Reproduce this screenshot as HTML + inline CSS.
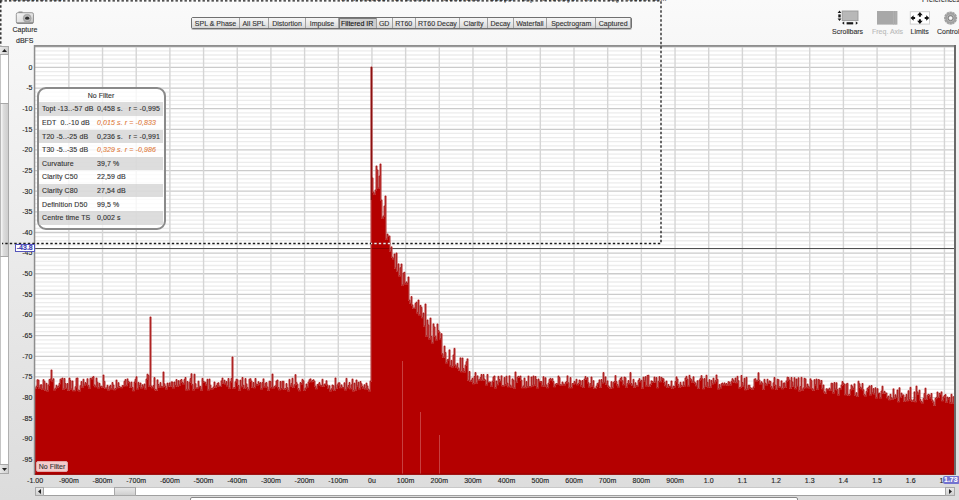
<!DOCTYPE html><html><head><meta charset="utf-8"><style>
html,body{margin:0;padding:0;}
body{-webkit-text-stroke:0.12px;width:959px;height:500px;overflow:hidden;position:relative;background:linear-gradient(#fafafa 0,#f7f7f7 46px,#dcdcdc 500px);font-family:"Liberation Sans",sans-serif;color:#2a2a2a;}
.a{position:absolute;white-space:nowrap;}
.t{font-size:7px;line-height:8px;}
.tabs{position:absolute;left:191px;top:17px;height:10px;border:1px solid #707070;border-radius:2px;display:flex;box-shadow:0 1px 0 #bdbdbd;}
.tab{height:10px;box-sizing:border-box;border-right:1px solid #a0a0a0;background:linear-gradient(#f6f6f6,#e6e6e6 60%,#d6d6d6);font-size:7px;line-height:11px;text-align:center;color:#333;}
.tab.sel{background:#cdcdcd;box-shadow:inset 1px 1px 0 #7a7a7a;color:#111;}
.yl{position:absolute;right:926.6px;font-size:7px;line-height:8px;color:#222;text-align:right;}
.xl{position:absolute;top:476.6px;font-size:7px;line-height:8px;color:#222;}
.row{position:absolute;left:39px;width:124px;height:13.6px;font-size:7px;line-height:14.8px;color:#333;}
.row.g{background:rgba(200,200,200,0.62);}
.row span{position:absolute;letter-spacing:0.1px;}
.or{color:#e07a3a;font-style:italic;}
</style></head><body>

<svg class="a" style="left:0;top:0" width="959" height="500" viewBox="0 0 959 500">
<rect x="35" y="46" width="919" height="428" fill="#fff"/>
<line x1="35" x2="954" y1="46.77" y2="46.77" stroke="#cbcbcb" stroke-width="1.3"/>
<line x1="35" x2="954" y1="50.89" y2="50.89" stroke="#ececec" stroke-width="1.3"/>
<line x1="35" x2="954" y1="55.02" y2="55.02" stroke="#ececec" stroke-width="1.3"/>
<line x1="35" x2="954" y1="59.15" y2="59.15" stroke="#ececec" stroke-width="1.3"/>
<line x1="35" x2="954" y1="63.27" y2="63.27" stroke="#ececec" stroke-width="1.3"/>
<line x1="35" x2="954" y1="67.40" y2="67.40" stroke="#cbcbcb" stroke-width="1.3"/>
<line x1="35" x2="954" y1="71.53" y2="71.53" stroke="#ececec" stroke-width="1.3"/>
<line x1="35" x2="954" y1="75.65" y2="75.65" stroke="#ececec" stroke-width="1.3"/>
<line x1="35" x2="954" y1="79.78" y2="79.78" stroke="#ececec" stroke-width="1.3"/>
<line x1="35" x2="954" y1="83.91" y2="83.91" stroke="#ececec" stroke-width="1.3"/>
<line x1="35" x2="954" y1="88.03" y2="88.03" stroke="#cbcbcb" stroke-width="1.3"/>
<line x1="35" x2="954" y1="92.16" y2="92.16" stroke="#ececec" stroke-width="1.3"/>
<line x1="35" x2="954" y1="96.29" y2="96.29" stroke="#ececec" stroke-width="1.3"/>
<line x1="35" x2="954" y1="100.42" y2="100.42" stroke="#ececec" stroke-width="1.3"/>
<line x1="35" x2="954" y1="104.54" y2="104.54" stroke="#ececec" stroke-width="1.3"/>
<line x1="35" x2="954" y1="108.67" y2="108.67" stroke="#cbcbcb" stroke-width="1.3"/>
<line x1="35" x2="954" y1="112.80" y2="112.80" stroke="#ececec" stroke-width="1.3"/>
<line x1="35" x2="954" y1="116.92" y2="116.92" stroke="#ececec" stroke-width="1.3"/>
<line x1="35" x2="954" y1="121.05" y2="121.05" stroke="#ececec" stroke-width="1.3"/>
<line x1="35" x2="954" y1="125.18" y2="125.18" stroke="#ececec" stroke-width="1.3"/>
<line x1="35" x2="954" y1="129.31" y2="129.31" stroke="#cbcbcb" stroke-width="1.3"/>
<line x1="35" x2="954" y1="133.43" y2="133.43" stroke="#ececec" stroke-width="1.3"/>
<line x1="35" x2="954" y1="137.56" y2="137.56" stroke="#ececec" stroke-width="1.3"/>
<line x1="35" x2="954" y1="141.69" y2="141.69" stroke="#ececec" stroke-width="1.3"/>
<line x1="35" x2="954" y1="145.81" y2="145.81" stroke="#ececec" stroke-width="1.3"/>
<line x1="35" x2="954" y1="149.94" y2="149.94" stroke="#cbcbcb" stroke-width="1.3"/>
<line x1="35" x2="954" y1="154.07" y2="154.07" stroke="#ececec" stroke-width="1.3"/>
<line x1="35" x2="954" y1="158.19" y2="158.19" stroke="#ececec" stroke-width="1.3"/>
<line x1="35" x2="954" y1="162.32" y2="162.32" stroke="#ececec" stroke-width="1.3"/>
<line x1="35" x2="954" y1="166.45" y2="166.45" stroke="#ececec" stroke-width="1.3"/>
<line x1="35" x2="954" y1="170.57" y2="170.57" stroke="#cbcbcb" stroke-width="1.3"/>
<line x1="35" x2="954" y1="174.70" y2="174.70" stroke="#ececec" stroke-width="1.3"/>
<line x1="35" x2="954" y1="178.83" y2="178.83" stroke="#ececec" stroke-width="1.3"/>
<line x1="35" x2="954" y1="182.96" y2="182.96" stroke="#ececec" stroke-width="1.3"/>
<line x1="35" x2="954" y1="187.08" y2="187.08" stroke="#ececec" stroke-width="1.3"/>
<line x1="35" x2="954" y1="191.21" y2="191.21" stroke="#cbcbcb" stroke-width="1.3"/>
<line x1="35" x2="954" y1="195.34" y2="195.34" stroke="#ececec" stroke-width="1.3"/>
<line x1="35" x2="954" y1="199.46" y2="199.46" stroke="#ececec" stroke-width="1.3"/>
<line x1="35" x2="954" y1="203.59" y2="203.59" stroke="#ececec" stroke-width="1.3"/>
<line x1="35" x2="954" y1="207.72" y2="207.72" stroke="#ececec" stroke-width="1.3"/>
<line x1="35" x2="954" y1="211.84" y2="211.84" stroke="#cbcbcb" stroke-width="1.3"/>
<line x1="35" x2="954" y1="215.97" y2="215.97" stroke="#ececec" stroke-width="1.3"/>
<line x1="35" x2="954" y1="220.10" y2="220.10" stroke="#ececec" stroke-width="1.3"/>
<line x1="35" x2="954" y1="224.23" y2="224.23" stroke="#ececec" stroke-width="1.3"/>
<line x1="35" x2="954" y1="228.35" y2="228.35" stroke="#ececec" stroke-width="1.3"/>
<line x1="35" x2="954" y1="232.48" y2="232.48" stroke="#cbcbcb" stroke-width="1.3"/>
<line x1="35" x2="954" y1="236.61" y2="236.61" stroke="#ececec" stroke-width="1.3"/>
<line x1="35" x2="954" y1="240.73" y2="240.73" stroke="#ececec" stroke-width="1.3"/>
<line x1="35" x2="954" y1="244.86" y2="244.86" stroke="#ececec" stroke-width="1.3"/>
<line x1="35" x2="954" y1="248.99" y2="248.99" stroke="#ececec" stroke-width="1.3"/>
<line x1="35" x2="954" y1="253.12" y2="253.12" stroke="#cbcbcb" stroke-width="1.3"/>
<line x1="35" x2="954" y1="257.24" y2="257.24" stroke="#ececec" stroke-width="1.3"/>
<line x1="35" x2="954" y1="261.37" y2="261.37" stroke="#ececec" stroke-width="1.3"/>
<line x1="35" x2="954" y1="265.50" y2="265.50" stroke="#ececec" stroke-width="1.3"/>
<line x1="35" x2="954" y1="269.62" y2="269.62" stroke="#ececec" stroke-width="1.3"/>
<line x1="35" x2="954" y1="273.75" y2="273.75" stroke="#cbcbcb" stroke-width="1.3"/>
<line x1="35" x2="954" y1="277.88" y2="277.88" stroke="#ececec" stroke-width="1.3"/>
<line x1="35" x2="954" y1="282.00" y2="282.00" stroke="#ececec" stroke-width="1.3"/>
<line x1="35" x2="954" y1="286.13" y2="286.13" stroke="#ececec" stroke-width="1.3"/>
<line x1="35" x2="954" y1="290.26" y2="290.26" stroke="#ececec" stroke-width="1.3"/>
<line x1="35" x2="954" y1="294.38" y2="294.38" stroke="#cbcbcb" stroke-width="1.3"/>
<line x1="35" x2="954" y1="298.51" y2="298.51" stroke="#ececec" stroke-width="1.3"/>
<line x1="35" x2="954" y1="302.64" y2="302.64" stroke="#ececec" stroke-width="1.3"/>
<line x1="35" x2="954" y1="306.77" y2="306.77" stroke="#ececec" stroke-width="1.3"/>
<line x1="35" x2="954" y1="310.89" y2="310.89" stroke="#ececec" stroke-width="1.3"/>
<line x1="35" x2="954" y1="315.02" y2="315.02" stroke="#cbcbcb" stroke-width="1.3"/>
<line x1="35" x2="954" y1="319.15" y2="319.15" stroke="#ececec" stroke-width="1.3"/>
<line x1="35" x2="954" y1="323.27" y2="323.27" stroke="#ececec" stroke-width="1.3"/>
<line x1="35" x2="954" y1="327.40" y2="327.40" stroke="#ececec" stroke-width="1.3"/>
<line x1="35" x2="954" y1="331.53" y2="331.53" stroke="#ececec" stroke-width="1.3"/>
<line x1="35" x2="954" y1="335.65" y2="335.65" stroke="#cbcbcb" stroke-width="1.3"/>
<line x1="35" x2="954" y1="339.78" y2="339.78" stroke="#ececec" stroke-width="1.3"/>
<line x1="35" x2="954" y1="343.91" y2="343.91" stroke="#ececec" stroke-width="1.3"/>
<line x1="35" x2="954" y1="348.04" y2="348.04" stroke="#ececec" stroke-width="1.3"/>
<line x1="35" x2="954" y1="352.16" y2="352.16" stroke="#ececec" stroke-width="1.3"/>
<line x1="35" x2="954" y1="356.29" y2="356.29" stroke="#cbcbcb" stroke-width="1.3"/>
<line x1="35" x2="954" y1="360.42" y2="360.42" stroke="#ececec" stroke-width="1.3"/>
<line x1="35" x2="954" y1="364.54" y2="364.54" stroke="#ececec" stroke-width="1.3"/>
<line x1="35" x2="954" y1="368.67" y2="368.67" stroke="#ececec" stroke-width="1.3"/>
<line x1="35" x2="954" y1="372.80" y2="372.80" stroke="#ececec" stroke-width="1.3"/>
<line x1="35" x2="954" y1="376.92" y2="376.92" stroke="#cbcbcb" stroke-width="1.3"/>
<line x1="35" x2="954" y1="381.05" y2="381.05" stroke="#ececec" stroke-width="1.3"/>
<line x1="35" x2="954" y1="385.18" y2="385.18" stroke="#ececec" stroke-width="1.3"/>
<line x1="35" x2="954" y1="389.31" y2="389.31" stroke="#ececec" stroke-width="1.3"/>
<line x1="35" x2="954" y1="393.43" y2="393.43" stroke="#ececec" stroke-width="1.3"/>
<line x1="35" x2="954" y1="397.56" y2="397.56" stroke="#cbcbcb" stroke-width="1.3"/>
<line x1="35" x2="954" y1="401.69" y2="401.69" stroke="#ececec" stroke-width="1.3"/>
<line x1="35" x2="954" y1="405.81" y2="405.81" stroke="#ececec" stroke-width="1.3"/>
<line x1="35" x2="954" y1="409.94" y2="409.94" stroke="#ececec" stroke-width="1.3"/>
<line x1="35" x2="954" y1="414.07" y2="414.07" stroke="#ececec" stroke-width="1.3"/>
<line x1="35" x2="954" y1="418.19" y2="418.19" stroke="#cbcbcb" stroke-width="1.3"/>
<line x1="35" x2="954" y1="422.32" y2="422.32" stroke="#ececec" stroke-width="1.3"/>
<line x1="35" x2="954" y1="426.45" y2="426.45" stroke="#ececec" stroke-width="1.3"/>
<line x1="35" x2="954" y1="430.58" y2="430.58" stroke="#ececec" stroke-width="1.3"/>
<line x1="35" x2="954" y1="434.70" y2="434.70" stroke="#ececec" stroke-width="1.3"/>
<line x1="35" x2="954" y1="438.83" y2="438.83" stroke="#cbcbcb" stroke-width="1.3"/>
<line x1="35" x2="954" y1="442.96" y2="442.96" stroke="#ececec" stroke-width="1.3"/>
<line x1="35" x2="954" y1="447.08" y2="447.08" stroke="#ececec" stroke-width="1.3"/>
<line x1="35" x2="954" y1="451.21" y2="451.21" stroke="#ececec" stroke-width="1.3"/>
<line x1="35" x2="954" y1="455.34" y2="455.34" stroke="#ececec" stroke-width="1.3"/>
<line x1="35" x2="954" y1="459.47" y2="459.47" stroke="#cbcbcb" stroke-width="1.3"/>
<line x1="35" x2="954" y1="463.59" y2="463.59" stroke="#ececec" stroke-width="1.3"/>
<line x1="35" x2="954" y1="467.72" y2="467.72" stroke="#ececec" stroke-width="1.3"/>
<line x1="35" x2="954" y1="471.85" y2="471.85" stroke="#ececec" stroke-width="1.3"/>
<line x1="68.87" x2="68.87" y1="46" y2="474" stroke="#d5d5d5" stroke-width="1.4"/>
<line x1="102.54" x2="102.54" y1="46" y2="474" stroke="#d5d5d5" stroke-width="1.4"/>
<line x1="136.22" x2="136.22" y1="46" y2="474" stroke="#d5d5d5" stroke-width="1.4"/>
<line x1="169.89" x2="169.89" y1="46" y2="474" stroke="#d5d5d5" stroke-width="1.4"/>
<line x1="203.57" x2="203.57" y1="46" y2="474" stroke="#d5d5d5" stroke-width="1.4"/>
<line x1="237.25" x2="237.25" y1="46" y2="474" stroke="#d5d5d5" stroke-width="1.4"/>
<line x1="270.92" x2="270.92" y1="46" y2="474" stroke="#d5d5d5" stroke-width="1.4"/>
<line x1="304.60" x2="304.60" y1="46" y2="474" stroke="#d5d5d5" stroke-width="1.4"/>
<line x1="338.27" x2="338.27" y1="46" y2="474" stroke="#d5d5d5" stroke-width="1.4"/>
<line x1="371.95" x2="371.95" y1="46" y2="474" stroke="#d5d5d5" stroke-width="1.4"/>
<line x1="405.63" x2="405.63" y1="46" y2="474" stroke="#d5d5d5" stroke-width="1.4"/>
<line x1="439.30" x2="439.30" y1="46" y2="474" stroke="#d5d5d5" stroke-width="1.4"/>
<line x1="472.98" x2="472.98" y1="46" y2="474" stroke="#d5d5d5" stroke-width="1.4"/>
<line x1="506.65" x2="506.65" y1="46" y2="474" stroke="#d5d5d5" stroke-width="1.4"/>
<line x1="540.33" x2="540.33" y1="46" y2="474" stroke="#d5d5d5" stroke-width="1.4"/>
<line x1="574.01" x2="574.01" y1="46" y2="474" stroke="#d5d5d5" stroke-width="1.4"/>
<line x1="607.68" x2="607.68" y1="46" y2="474" stroke="#d5d5d5" stroke-width="1.4"/>
<line x1="641.36" x2="641.36" y1="46" y2="474" stroke="#d5d5d5" stroke-width="1.4"/>
<line x1="675.03" x2="675.03" y1="46" y2="474" stroke="#d5d5d5" stroke-width="1.4"/>
<line x1="708.71" x2="708.71" y1="46" y2="474" stroke="#d5d5d5" stroke-width="1.4"/>
<line x1="742.39" x2="742.39" y1="46" y2="474" stroke="#d5d5d5" stroke-width="1.4"/>
<line x1="776.06" x2="776.06" y1="46" y2="474" stroke="#d5d5d5" stroke-width="1.4"/>
<line x1="809.74" x2="809.74" y1="46" y2="474" stroke="#d5d5d5" stroke-width="1.4"/>
<line x1="843.41" x2="843.41" y1="46" y2="474" stroke="#d5d5d5" stroke-width="1.4"/>
<line x1="877.09" x2="877.09" y1="46" y2="474" stroke="#d5d5d5" stroke-width="1.4"/>
<line x1="910.77" x2="910.77" y1="46" y2="474" stroke="#d5d5d5" stroke-width="1.4"/>
<line x1="944.44" x2="944.44" y1="46" y2="474" stroke="#d5d5d5" stroke-width="1.4"/>
<line x1="35" x2="954" y1="248.5" y2="248.5" stroke="#505050" stroke-width="1"/>
<clipPath id="wf"><path d="M35,474.8L35,387.9L36,387.9L36,386.2L37,386.2L37,379.8L38,379.8L38,380.1L39,380.1L39,388.0L40,388.0L40,384.9L41,384.9L41,384.8L42,384.8L42,389.0L43,389.0L43,379.7L44,379.7L44,381.4L45,381.4L45,390.2L46,390.2L46,383.3L47,383.3L47,390.6L48,390.6L48,384.9L49,384.9L49,379.6L50,379.6L50,379.0L51,379.0L51,370.0L52,370.0L52,380.6L53,380.6L53,378.8L54,378.8L54,389.7L55,389.7L55,388.2L56,388.2L56,385.3L57,385.3L57,387.1L58,387.1L58,386.0L59,386.0L59,383.4L60,383.4L60,379.2L61,379.2L61,378.9L62,378.9L62,378.1L63,378.1L63,388.9L64,388.9L64,378.5L65,378.5L65,383.6L66,383.6L66,388.3L67,388.3L67,383.5L68,383.5L68,390.2L69,390.2L69,378.1L70,378.1L70,380.6L71,380.6L71,389.0L72,389.0L72,381.0L73,381.0L73,390.4L74,390.4L74,390.4L75,390.4L75,386.7L76,386.7L76,378.3L77,378.3L77,378.0L78,378.0L78,390.0L79,390.0L79,390.6L80,390.6L80,385.7L81,385.7L81,381.6L82,381.6L82,386.9L83,386.9L83,379.3L84,379.3L84,385.0L85,385.0L85,382.6L86,382.6L86,383.7L87,383.7L87,378.8L88,378.8L88,385.4L89,385.4L89,387.9L90,387.9L90,378.3L91,378.3L91,378.8L92,378.8L92,377.4L93,377.4L93,376.6L94,376.6L94,384.9L95,384.9L95,386.4L96,386.4L96,378.1L97,378.1L97,382.2L98,382.2L98,387.7L99,387.7L99,383.3L100,383.3L100,386.3L101,386.3L101,386.2L102,386.2L102,387.1L103,387.1L103,375.1L104,375.1L104,381.4L105,381.4L105,388.1L106,388.1L106,387.9L107,387.9L107,385.3L108,385.3L108,389.7L109,389.7L109,386.7L110,386.7L110,385.3L111,385.3L111,388.8L112,388.8L112,382.5L113,382.5L113,385.1L114,385.1L114,389.4L115,389.4L115,388.5L116,388.5L116,380.1L117,380.1L117,387.4L118,387.4L118,382.7L119,382.7L119,386.5L120,386.5L120,387.2L121,387.2L121,387.5L122,387.5L122,385.6L123,385.6L123,385.7L124,385.7L124,381.3L125,381.3L125,379.6L126,379.6L126,385.4L127,385.4L127,378.9L128,378.9L128,381.3L129,381.3L129,382.4L130,382.4L130,387.2L131,387.2L131,382.1L132,382.1L132,387.3L133,387.3L133,390.4L134,390.4L134,382.0L135,382.0L135,379.3L136,379.3L136,376.8L137,376.8L137,388.8L138,388.8L138,382.4L139,382.4L139,385.6L140,385.6L140,383.0L141,383.0L141,387.7L142,387.7L142,384.8L143,384.8L143,386.4L144,386.4L144,384.0L145,384.0L145,388.8L146,388.8L146,379.0L147,379.0L147,374.2L148,374.2L148,375.4L149,375.4L149,386.0L150,386.0L150,317.0L151,317.0L151,386.0L152,386.0L152,387.5L153,387.5L153,385.5L154,385.5L154,377.6L155,377.6L155,389.4L156,389.4L156,390.1L157,390.1L157,379.9L158,379.9L158,384.5L159,384.5L159,386.9L160,386.9L160,382.6L161,382.6L161,386.3L162,386.3L162,386.7L163,386.7L163,372.0L164,372.0L164,383.8L165,383.8L165,386.1L166,386.1L166,388.7L167,388.7L167,383.1L168,383.1L168,386.1L169,386.1L169,382.9L170,382.9L170,386.2L171,386.2L171,381.9L172,381.9L172,382.0L173,382.0L173,387.8L174,387.8L174,382.0L175,382.0L175,385.5L176,385.5L176,379.6L177,379.6L177,386.1L178,386.1L178,380.7L179,380.7L179,385.0L180,385.0L180,380.4L181,380.4L181,379.5L182,379.5L182,382.3L183,382.3L183,383.7L184,383.7L184,379.6L185,379.6L185,377.5L186,377.5L186,389.7L187,389.7L187,381.5L188,381.5L188,389.4L189,389.4L189,382.2L190,382.2L190,378.6L191,378.6L191,373.8L192,373.8L192,384.4L193,384.4L193,389.6L194,389.6L194,374.2L195,374.2L195,383.7L196,383.7L196,387.9L197,387.9L197,387.8L198,387.8L198,381.2L199,381.2L199,386.2L200,386.2L200,386.4L201,386.4L201,389.9L202,389.9L202,378.4L203,378.4L203,381.3L204,381.3L204,382.0L205,382.0L205,382.2L206,382.2L206,384.7L207,384.7L207,379.3L208,379.3L208,389.8L209,389.8L209,379.1L210,379.1L210,385.2L211,385.2L211,388.6L212,388.6L212,388.4L213,388.4L213,386.9L214,386.9L214,382.0L215,382.0L215,387.2L216,387.2L216,385.6L217,385.6L217,383.4L218,383.4L218,382.8L219,382.8L219,386.0L220,386.0L220,386.3L221,386.3L221,380.9L222,380.9L222,378.1L223,378.1L223,383.2L224,383.2L224,380.2L225,380.2L225,383.8L226,383.8L226,381.6L227,381.6L227,385.8L228,385.8L228,378.5L229,378.5L229,388.0L230,388.0L230,381.7L231,381.7L231,378.5L232,378.5L232,357.0L233,357.0L233,387.9L234,387.9L234,387.6L235,387.6L235,381.8L236,381.8L236,379.3L237,379.3L237,379.8L238,379.8L238,385.5L239,385.5L239,389.9L240,389.9L240,380.2L241,380.2L241,386.4L242,386.4L242,377.5L243,377.5L243,385.3L244,385.3L244,388.3L245,388.3L245,378.6L246,378.6L246,383.9L247,383.9L247,387.4L248,387.4L248,389.5L249,389.5L249,379.2L250,379.2L250,378.8L251,378.8L251,381.0L252,381.0L252,387.2L253,387.2L253,382.5L254,382.5L254,387.5L255,387.5L255,378.5L256,378.5L256,384.0L257,384.0L257,384.6L258,384.6L258,381.7L259,381.7L259,383.6L260,383.6L260,382.6L261,382.6L261,388.7L262,388.7L262,382.5L263,382.5L263,378.9L264,378.9L264,386.7L265,386.7L265,383.2L266,383.2L266,382.6L267,382.6L267,386.9L268,386.9L268,390.1L269,390.1L269,381.2L270,381.2L270,381.4L271,381.4L271,387.5L272,387.5L272,374.1L273,374.1L273,387.8L274,387.8L274,386.4L275,386.4L275,385.8L276,385.8L276,381.0L277,381.0L277,380.0L278,380.0L278,387.5L279,387.5L279,389.5L280,389.5L280,381.5L281,381.5L281,388.5L282,388.5L282,381.3L283,381.3L283,381.3L284,381.3L284,389.1L285,389.1L285,388.5L286,388.5L286,383.6L287,383.6L287,387.7L288,387.7L288,390.6L289,390.6L289,379.4L290,379.4L290,386.0L291,386.0L291,383.4L292,383.4L292,378.3L293,378.3L293,387.1L294,387.1L294,384.7L295,384.7L295,374.7L296,374.7L296,382.4L297,382.4L297,384.2L298,384.2L298,388.5L299,388.5L299,390.5L300,390.5L300,382.6L301,382.6L301,383.6L302,383.6L302,379.4L303,379.4L303,380.7L304,380.7L304,390.3L305,390.3L305,388.0L306,388.0L306,384.0L307,384.0L307,386.8L308,386.8L308,382.0L309,382.0L309,379.8L310,379.8L310,378.9L311,378.9L311,381.4L312,381.4L312,380.5L313,380.5L313,379.8L314,379.8L314,381.2L315,381.2L315,386.2L316,386.2L316,388.4L317,388.4L317,384.5L318,384.5L318,384.0L319,384.0L319,382.6L320,382.6L320,385.0L321,385.0L321,385.8L322,385.8L322,379.3L323,379.3L323,386.2L324,386.2L324,384.1L325,384.1L325,384.0L326,384.0L326,380.8L327,380.8L327,385.0L328,385.0L328,388.3L329,388.3L329,385.8L330,385.8L330,390.6L331,390.6L331,388.8L332,388.8L332,385.0L333,385.0L333,385.7L334,385.7L334,390.3L335,390.3L335,378.0L336,378.0L336,388.2L337,388.2L337,384.8L338,384.8L338,382.9L339,382.9L339,382.8L340,382.8L340,387.4L341,387.4L341,384.9L342,384.9L342,387.1L343,387.1L343,387.5L344,387.5L344,382.8L345,382.8L345,389.8L346,389.8L346,378.4L347,378.4L347,387.5L348,387.5L348,385.5L349,385.5L349,382.5L350,382.5L350,388.4L351,388.4L351,384.8L352,384.8L352,379.1L353,379.1L353,390.6L354,390.6L354,383.1L355,383.1L355,389.9L356,389.9L356,380.0L357,380.0L357,385.9L358,385.9L358,382.2L359,382.2L359,388.7L360,388.7L360,381.5L361,381.5L361,383.8L362,383.8L362,386.3L363,386.3L363,388.0L364,388.0L364,384.8L365,384.8L365,388.8L366,388.8L366,383.1L367,383.1L367,386.0L368,386.0L368,389.0L369,389.0L369,390.7L370,390.7L370,381.1L371,381.1L371,67.0L372,67.0L372,178.0L373,178.0L373,192.0L374,192.0L374,194.0L375,194.0L375,190.0L376,190.0L376,166.0L377,166.0L377,170.0L378,170.0L378,188.0L379,188.0L379,176.0L380,176.0L380,164.0L381,164.0L381,200.0L382,200.0L382,218.0L383,218.0L383,216.0L384,216.0L384,206.0L385,206.0L385,196.0L386,196.0L386,239.0L387,239.0L387,234.1L388,234.1L388,236.1L389,236.1L389,236.0L390,236.0L390,251.2L391,251.2L391,246.9L392,246.9L392,257.2L393,257.2L393,258.7L394,258.7L394,254.0L395,254.0L395,268.1L396,268.1L396,253.0L397,253.0L397,271.3L398,271.3L398,263.9L399,263.9L399,275.6L400,275.6L400,267.7L401,267.7L401,264.0L402,264.0L402,285.0L403,285.0L403,273.0L404,273.0L404,272.3L405,272.3L405,283.6L406,283.6L406,281.9L407,281.9L407,283.6L408,283.6L408,277.0L409,277.0L409,300.1L410,300.1L410,303.3L411,303.3L411,296.6L412,296.6L412,304.9L413,304.9L413,308.1L414,308.1L414,308.0L415,308.0L415,303.5L416,303.5L416,302.2L417,302.2L417,312.6L418,312.6L418,300.0L419,300.0L419,314.8L420,314.8L420,305.4L421,305.4L421,307.4L422,307.4L422,317.4L423,317.4L423,313.0L424,313.0L424,326.0L425,326.0L425,304.0L426,304.0L426,335.9L427,335.9L427,320.0L428,320.0L428,324.9L429,324.9L429,338.6L430,338.6L430,318.1L431,318.1L431,336.5L432,336.5L432,342.8L433,342.8L433,323.9L434,323.9L434,327.0L435,327.0L435,336.3L436,336.3L436,339.8L437,339.8L437,324.0L438,324.0L438,330.5L439,330.5L439,332.0L440,332.0L440,338.8L441,338.8L441,333.7L442,333.7L442,353.7L443,353.7L443,357.1L444,357.1L444,346.1L445,346.1L445,352.6L446,352.6L446,362.7L447,362.7L447,359.7L448,359.7L448,359.2L449,359.2L449,349.9L450,349.9L450,365.7L451,365.7L451,360.4L452,360.4L452,366.6L453,366.6L453,355.0L454,355.0L454,348.4L455,348.4L455,364.9L456,364.9L456,367.0L457,367.0L457,363.4L458,363.4L458,367.9L459,367.9L459,370.2L460,370.2L460,357.9L461,357.9L461,371.5L462,371.5L462,358.0L463,358.0L463,368.5L464,368.5L464,371.6L465,371.6L465,365.2L466,365.2L466,361.7L467,361.7L467,358.9L468,358.9L468,380.3L469,380.3L469,371.5L470,371.5L470,381.3L471,381.3L471,380.1L472,380.1L472,378.3L473,378.3L473,383.5L474,383.5L474,376.5L475,376.5L475,372.6L476,372.6L476,383.0L477,383.0L477,375.9L478,375.9L478,380.0L479,380.0L479,379.7L480,379.7L480,377.6L481,377.6L481,374.5L482,374.5L482,380.3L483,380.3L483,374.5L484,374.5L484,379.0L485,379.0L485,380.3L486,380.3L486,384.8L487,384.8L487,374.5L488,374.5L488,382.3L489,382.3L489,381.9L490,381.9L490,382.1L491,382.1L491,386.0L492,386.0L492,381.2L493,381.2L493,377.0L494,377.0L494,376.0L495,376.0L495,387.6L496,387.6L496,381.0L497,381.0L497,384.4L498,384.4L498,376.4L499,376.4L499,379.5L500,379.5L500,381.5L501,381.5L501,375.9L502,375.9L502,385.5L503,385.5L503,385.7L504,385.7L504,377.6L505,377.6L505,384.6L506,384.6L506,376.2L507,376.2L507,383.1L508,383.1L508,386.4L509,386.4L509,375.9L510,375.9L510,385.2L511,385.2L511,387.0L512,387.0L512,378.9L513,378.9L513,380.3L514,380.3L514,387.9L515,387.9L515,372.0L516,372.0L516,382.1L517,382.1L517,377.2L518,377.2L518,376.4L519,376.4L519,377.1L520,377.1L520,376.1L521,376.1L521,380.2L522,380.2L522,387.4L523,387.4L523,385.9L524,385.9L524,378.1L525,378.1L525,387.4L526,387.4L526,381.6L527,381.6L527,386.7L528,386.7L528,376.1L529,376.1L529,386.5L530,386.5L530,386.5L531,386.5L531,377.0L532,377.0L532,385.7L533,385.7L533,376.0L534,376.0L534,385.1L535,385.1L535,376.5L536,376.5L536,379.5L537,379.5L537,387.8L538,387.8L538,379.0L539,379.0L539,381.2L540,381.2L540,381.5L541,381.5L541,381.6L542,381.6L542,385.7L543,385.7L543,376.7L544,376.7L544,385.9L545,385.9L545,377.8L546,377.8L546,384.9L547,384.9L547,387.5L548,387.5L548,383.1L549,383.1L549,379.4L550,379.4L550,378.4L551,378.4L551,379.7L552,379.7L552,378.7L553,378.7L553,381.5L554,381.5L554,386.4L555,386.4L555,384.2L556,384.2L556,383.6L557,383.6L557,383.8L558,383.8L558,376.0L559,376.0L559,377.5L560,377.5L560,384.7L561,384.7L561,384.9L562,384.9L562,382.0L563,382.0L563,384.0L564,384.0L564,384.7L565,384.7L565,382.6L566,382.6L566,381.6L567,381.6L567,375.9L568,375.9L568,382.7L569,382.7L569,387.4L570,387.4L570,377.6L571,377.6L571,387.5L572,387.5L572,383.5L573,383.5L573,383.7L574,383.7L574,381.4L575,381.4L575,382.9L576,382.9L576,379.3L577,379.3L577,384.5L578,384.5L578,383.3L579,383.3L579,380.1L580,380.1L580,380.9L581,380.9L581,385.6L582,385.6L582,380.5L583,380.5L583,387.3L584,387.3L584,379.1L585,379.1L585,376.6L586,376.6L586,379.0L587,379.0L587,377.7L588,377.7L588,382.7L589,382.7L589,386.8L590,386.8L590,383.6L591,383.6L591,377.0L592,377.0L592,386.0L593,386.0L593,380.7L594,380.7L594,388.1L595,388.1L595,388.3L596,388.3L596,386.1L597,386.1L597,383.4L598,383.4L598,382.9L599,382.9L599,379.9L600,379.9L600,387.2L601,387.2L601,379.5L602,379.5L602,382.8L603,382.8L603,372.6L604,372.6L604,382.3L605,382.3L605,376.9L606,376.9L606,384.2L607,384.2L607,380.9L608,380.9L608,385.9L609,385.9L609,387.3L610,387.3L610,388.2L611,388.2L611,381.7L612,381.7L612,387.4L613,387.4L613,382.4L614,382.4L614,381.5L615,381.5L615,375.7L616,375.7L616,381.6L617,381.6L617,384.6L618,384.6L618,386.8L619,386.8L619,380.4L620,380.4L620,378.5L621,378.5L621,377.3L622,377.3L622,380.7L623,380.7L623,384.5L624,384.5L624,377.1L625,377.1L625,377.8L626,377.8L626,387.0L627,387.0L627,383.4L628,383.4L628,380.6L629,380.6L629,383.5L630,383.5L630,372.6L631,372.6L631,383.5L632,383.5L632,385.3L633,385.3L633,379.4L634,379.4L634,387.2L635,387.2L635,382.8L636,382.8L636,385.4L637,385.4L637,385.8L638,385.8L638,380.5L639,380.5L639,378.7L640,378.7L640,381.5L641,381.5L641,380.3L642,380.3L642,387.9L643,387.9L643,377.2L644,377.2L644,380.9L645,380.9L645,376.7L646,376.7L646,385.7L647,385.7L647,375.5L648,375.5L648,375.3L649,375.3L649,386.3L650,386.3L650,384.2L651,384.2L651,380.9L652,380.9L652,381.6L653,381.6L653,382.3L654,382.3L654,377.1L655,377.1L655,382.1L656,382.1L656,377.6L657,377.6L657,387.5L658,387.5L658,381.3L659,381.3L659,376.7L660,376.7L660,381.4L661,381.4L661,377.4L662,377.4L662,378.4L663,378.4L663,378.8L664,378.8L664,382.3L665,382.3L665,385.4L666,385.4L666,381.1L667,381.1L667,387.3L668,387.3L668,384.5L669,384.5L669,386.5L670,386.5L670,386.2L671,386.2L671,381.0L672,381.0L672,388.1L673,388.1L673,386.1L674,386.1L674,386.6L675,386.6L675,381.5L676,381.5L676,376.9L677,376.9L677,379.0L678,379.0L678,384.6L679,384.6L679,387.3L680,387.3L680,382.3L681,382.3L681,385.3L682,385.3L682,386.3L683,386.3L683,381.9L684,381.9L684,385.8L685,385.8L685,378.0L686,378.0L686,376.4L687,376.4L687,379.2L688,379.2L688,385.8L689,385.8L689,375.4L690,375.4L690,378.4L691,378.4L691,379.7L692,379.7L692,381.9L693,381.9L693,376.8L694,376.8L694,381.9L695,381.9L695,383.0L696,383.0L696,385.4L697,385.4L697,380.8L698,380.8L698,388.3L699,388.3L699,380.0L700,380.0L700,378.4L701,378.4L701,375.7L702,375.7L702,378.8L703,378.8L703,388.4L704,388.4L704,378.6L705,378.6L705,386.2L706,386.2L706,375.3L707,375.3L707,382.3L708,382.3L708,387.0L709,387.0L709,379.7L710,379.7L710,386.9L711,386.9L711,380.4L712,380.4L712,383.8L713,383.8L713,378.2L714,378.2L714,382.8L715,382.8L715,380.6L716,380.6L716,375.0L717,375.0L717,379.4L718,379.4L718,388.7L719,388.7L719,384.6L720,384.6L720,387.8L721,387.8L721,383.8L722,383.8L722,383.0L723,383.0L723,384.7L724,384.7L724,382.9L725,382.9L725,384.4L726,384.4L726,383.5L727,383.5L727,384.9L728,384.9L728,381.7L729,381.7L729,382.1L730,382.1L730,384.6L731,384.6L731,381.4L732,381.4L732,378.7L733,378.7L733,380.1L734,380.1L734,382.1L735,382.1L735,378.1L736,378.1L736,382.4L737,382.4L737,376.4L738,376.4L738,380.7L739,380.7L739,387.7L740,387.7L740,387.1L741,387.1L741,375.5L742,375.5L742,382.5L743,382.5L743,386.0L744,386.0L744,378.3L745,378.3L745,389.4L746,389.4L746,377.3L747,377.3L747,388.9L748,388.9L748,385.3L749,385.3L749,385.3L750,385.3L750,387.7L751,387.7L751,388.3L752,388.3L752,389.0L753,389.0L753,386.9L754,386.9L754,379.2L755,379.2L755,378.8L756,378.8L756,380.8L757,380.8L757,380.2L758,380.2L758,372.8L759,372.8L759,380.2L760,380.2L760,383.8L761,383.8L761,381.8L762,381.8L762,383.2L763,383.2L763,389.3L764,389.3L764,379.4L765,379.4L765,383.1L766,383.1L766,384.7L767,384.7L767,379.3L768,379.3L768,383.1L769,383.1L769,380.9L770,380.9L770,381.6L771,381.6L771,386.4L772,386.4L772,388.4L773,388.4L773,382.8L774,382.8L774,377.5L775,377.5L775,385.1L776,385.1L776,389.3L777,389.3L777,379.3L778,379.3L778,379.7L779,379.7L779,386.8L780,386.8L780,387.1L781,387.1L781,380.9L782,380.9L782,388.5L783,388.5L783,383.2L784,383.2L784,382.9L785,382.9L785,387.1L786,387.1L786,380.9L787,380.9L787,377.2L788,377.2L788,377.5L789,377.5L789,380.0L790,380.0L790,388.1L791,388.1L791,377.5L792,377.5L792,381.9L793,381.9L793,386.2L794,386.2L794,377.7L795,377.7L795,388.5L796,388.5L796,379.0L797,379.0L797,386.3L798,386.3L798,377.8L799,377.8L799,390.6L800,390.6L800,386.6L801,386.6L801,377.4L802,377.4L802,390.0L803,390.0L803,387.9L804,387.9L804,378.3L805,378.3L805,378.9L806,378.9L806,387.4L807,387.4L807,384.1L808,384.1L808,386.2L809,386.2L809,387.7L810,387.7L810,378.9L811,378.9L811,380.6L812,380.6L812,388.7L813,388.7L813,390.1L814,390.1L814,379.7L815,379.7L815,384.7L816,384.7L816,379.1L817,379.1L817,389.0L818,389.0L818,379.6L819,379.6L819,380.0L820,380.0L820,383.7L821,383.7L821,380.5L822,380.5L822,388.4L823,388.4L823,385.0L824,385.0L824,391.7L825,391.7L825,393.2L826,393.2L826,388.8L827,388.8L827,389.1L828,389.1L828,389.4L829,389.4L829,388.2L830,388.2L830,389.9L831,389.9L831,383.2L832,383.2L832,383.4L833,383.4L833,392.6L834,392.6L834,382.5L835,382.5L835,389.1L836,389.1L836,382.8L837,382.8L837,389.6L838,389.6L838,394.6L839,394.6L839,388.2L840,388.2L840,388.7L841,388.7L841,385.1L842,385.1L842,381.5L843,381.5L843,383.2L844,383.2L844,384.3L845,384.3L845,394.4L846,394.4L846,383.9L847,383.9L847,383.4L848,383.4L848,395.1L849,395.1L849,394.4L850,394.4L850,389.7L851,389.7L851,385.0L852,385.0L852,386.7L853,386.7L853,388.6L854,388.6L854,383.9L855,383.9L855,395.3L856,395.3L856,392.7L857,392.7L857,396.3L858,396.3L858,381.2L859,381.2L859,383.8L860,383.8L860,387.1L861,387.1L861,388.4L862,388.4L862,383.5L863,383.5L863,389.8L864,389.8L864,394.4L865,394.4L865,395.7L866,395.7L866,391.4L867,391.4L867,388.3L868,388.3L868,387.6L869,387.6L869,385.9L870,385.9L870,394.7L871,394.7L871,385.5L872,385.5L872,392.8L873,392.8L873,388.6L874,388.6L874,393.8L875,393.8L875,387.8L876,387.8L876,397.7L877,397.7L877,388.7L878,388.7L878,393.3L879,393.3L879,393.1L880,393.1L880,397.8L881,397.8L881,391.0L882,391.0L882,386.2L883,386.2L883,393.2L884,393.2L884,391.3L885,391.3L885,392.9L886,392.9L886,393.1L887,393.1L887,397.4L888,397.4L888,396.1L889,396.1L889,399.4L890,399.4L890,394.3L891,394.3L891,397.8L892,397.8L892,398.9L893,398.9L893,388.9L894,388.9L894,398.2L895,398.2L895,394.8L896,394.8L896,397.2L897,397.2L897,390.0L898,390.0L898,401.5L899,401.5L899,387.8L900,387.8L900,397.3L901,397.3L901,393.1L902,393.1L902,395.0L903,395.0L903,394.9L904,394.9L904,401.3L905,401.3L905,397.3L906,397.3L906,394.4L907,394.4L907,400.4L908,400.4L908,390.8L909,390.8L909,399.5L910,399.5L910,387.4L911,387.4L911,399.9L912,399.9L912,401.2L913,401.2L913,399.8L914,399.8L914,391.9L915,391.9L915,401.4L916,401.4L916,386.1L917,386.1L917,391.9L918,391.9L918,393.9L919,393.9L919,390.2L920,390.2L920,399.6L921,399.6L921,401.5L922,401.5L922,402.8L923,402.8L923,398.6L924,398.6L924,393.6L925,393.6L925,388.2L926,388.2L926,399.3L927,399.3L927,395.2L928,395.2L928,394.3L929,394.3L929,395.0L930,395.0L930,397.7L931,397.7L931,393.5L932,393.5L932,400.0L933,400.0L933,401.9L934,401.9L934,405.2L935,405.2L935,398.5L936,398.5L936,397.4L937,397.4L937,392.0L938,392.0L938,397.3L939,397.3L939,393.3L940,393.3L940,394.1L941,394.1L941,391.9L942,391.9L942,400.4L943,400.4L943,396.9L944,396.9L944,395.5L945,395.5L945,394.6L946,394.6L946,402.0L947,402.0L947,397.1L948,397.1L948,398.6L949,398.6L949,397.5L950,397.5L950,402.6L951,402.6L951,394.3L952,394.3L952,402.9L953,402.9L953,396.7L954,396.7L954,474.8Z"/></clipPath>
<path d="M35,474.8L35,387.9L36,387.9L36,386.2L37,386.2L37,379.8L38,379.8L38,380.1L39,380.1L39,388.0L40,388.0L40,384.9L41,384.9L41,384.8L42,384.8L42,389.0L43,389.0L43,379.7L44,379.7L44,381.4L45,381.4L45,390.2L46,390.2L46,383.3L47,383.3L47,390.6L48,390.6L48,384.9L49,384.9L49,379.6L50,379.6L50,379.0L51,379.0L51,370.0L52,370.0L52,380.6L53,380.6L53,378.8L54,378.8L54,389.7L55,389.7L55,388.2L56,388.2L56,385.3L57,385.3L57,387.1L58,387.1L58,386.0L59,386.0L59,383.4L60,383.4L60,379.2L61,379.2L61,378.9L62,378.9L62,378.1L63,378.1L63,388.9L64,388.9L64,378.5L65,378.5L65,383.6L66,383.6L66,388.3L67,388.3L67,383.5L68,383.5L68,390.2L69,390.2L69,378.1L70,378.1L70,380.6L71,380.6L71,389.0L72,389.0L72,381.0L73,381.0L73,390.4L74,390.4L74,390.4L75,390.4L75,386.7L76,386.7L76,378.3L77,378.3L77,378.0L78,378.0L78,390.0L79,390.0L79,390.6L80,390.6L80,385.7L81,385.7L81,381.6L82,381.6L82,386.9L83,386.9L83,379.3L84,379.3L84,385.0L85,385.0L85,382.6L86,382.6L86,383.7L87,383.7L87,378.8L88,378.8L88,385.4L89,385.4L89,387.9L90,387.9L90,378.3L91,378.3L91,378.8L92,378.8L92,377.4L93,377.4L93,376.6L94,376.6L94,384.9L95,384.9L95,386.4L96,386.4L96,378.1L97,378.1L97,382.2L98,382.2L98,387.7L99,387.7L99,383.3L100,383.3L100,386.3L101,386.3L101,386.2L102,386.2L102,387.1L103,387.1L103,375.1L104,375.1L104,381.4L105,381.4L105,388.1L106,388.1L106,387.9L107,387.9L107,385.3L108,385.3L108,389.7L109,389.7L109,386.7L110,386.7L110,385.3L111,385.3L111,388.8L112,388.8L112,382.5L113,382.5L113,385.1L114,385.1L114,389.4L115,389.4L115,388.5L116,388.5L116,380.1L117,380.1L117,387.4L118,387.4L118,382.7L119,382.7L119,386.5L120,386.5L120,387.2L121,387.2L121,387.5L122,387.5L122,385.6L123,385.6L123,385.7L124,385.7L124,381.3L125,381.3L125,379.6L126,379.6L126,385.4L127,385.4L127,378.9L128,378.9L128,381.3L129,381.3L129,382.4L130,382.4L130,387.2L131,387.2L131,382.1L132,382.1L132,387.3L133,387.3L133,390.4L134,390.4L134,382.0L135,382.0L135,379.3L136,379.3L136,376.8L137,376.8L137,388.8L138,388.8L138,382.4L139,382.4L139,385.6L140,385.6L140,383.0L141,383.0L141,387.7L142,387.7L142,384.8L143,384.8L143,386.4L144,386.4L144,384.0L145,384.0L145,388.8L146,388.8L146,379.0L147,379.0L147,374.2L148,374.2L148,375.4L149,375.4L149,386.0L150,386.0L150,317.0L151,317.0L151,386.0L152,386.0L152,387.5L153,387.5L153,385.5L154,385.5L154,377.6L155,377.6L155,389.4L156,389.4L156,390.1L157,390.1L157,379.9L158,379.9L158,384.5L159,384.5L159,386.9L160,386.9L160,382.6L161,382.6L161,386.3L162,386.3L162,386.7L163,386.7L163,372.0L164,372.0L164,383.8L165,383.8L165,386.1L166,386.1L166,388.7L167,388.7L167,383.1L168,383.1L168,386.1L169,386.1L169,382.9L170,382.9L170,386.2L171,386.2L171,381.9L172,381.9L172,382.0L173,382.0L173,387.8L174,387.8L174,382.0L175,382.0L175,385.5L176,385.5L176,379.6L177,379.6L177,386.1L178,386.1L178,380.7L179,380.7L179,385.0L180,385.0L180,380.4L181,380.4L181,379.5L182,379.5L182,382.3L183,382.3L183,383.7L184,383.7L184,379.6L185,379.6L185,377.5L186,377.5L186,389.7L187,389.7L187,381.5L188,381.5L188,389.4L189,389.4L189,382.2L190,382.2L190,378.6L191,378.6L191,373.8L192,373.8L192,384.4L193,384.4L193,389.6L194,389.6L194,374.2L195,374.2L195,383.7L196,383.7L196,387.9L197,387.9L197,387.8L198,387.8L198,381.2L199,381.2L199,386.2L200,386.2L200,386.4L201,386.4L201,389.9L202,389.9L202,378.4L203,378.4L203,381.3L204,381.3L204,382.0L205,382.0L205,382.2L206,382.2L206,384.7L207,384.7L207,379.3L208,379.3L208,389.8L209,389.8L209,379.1L210,379.1L210,385.2L211,385.2L211,388.6L212,388.6L212,388.4L213,388.4L213,386.9L214,386.9L214,382.0L215,382.0L215,387.2L216,387.2L216,385.6L217,385.6L217,383.4L218,383.4L218,382.8L219,382.8L219,386.0L220,386.0L220,386.3L221,386.3L221,380.9L222,380.9L222,378.1L223,378.1L223,383.2L224,383.2L224,380.2L225,380.2L225,383.8L226,383.8L226,381.6L227,381.6L227,385.8L228,385.8L228,378.5L229,378.5L229,388.0L230,388.0L230,381.7L231,381.7L231,378.5L232,378.5L232,357.0L233,357.0L233,387.9L234,387.9L234,387.6L235,387.6L235,381.8L236,381.8L236,379.3L237,379.3L237,379.8L238,379.8L238,385.5L239,385.5L239,389.9L240,389.9L240,380.2L241,380.2L241,386.4L242,386.4L242,377.5L243,377.5L243,385.3L244,385.3L244,388.3L245,388.3L245,378.6L246,378.6L246,383.9L247,383.9L247,387.4L248,387.4L248,389.5L249,389.5L249,379.2L250,379.2L250,378.8L251,378.8L251,381.0L252,381.0L252,387.2L253,387.2L253,382.5L254,382.5L254,387.5L255,387.5L255,378.5L256,378.5L256,384.0L257,384.0L257,384.6L258,384.6L258,381.7L259,381.7L259,383.6L260,383.6L260,382.6L261,382.6L261,388.7L262,388.7L262,382.5L263,382.5L263,378.9L264,378.9L264,386.7L265,386.7L265,383.2L266,383.2L266,382.6L267,382.6L267,386.9L268,386.9L268,390.1L269,390.1L269,381.2L270,381.2L270,381.4L271,381.4L271,387.5L272,387.5L272,374.1L273,374.1L273,387.8L274,387.8L274,386.4L275,386.4L275,385.8L276,385.8L276,381.0L277,381.0L277,380.0L278,380.0L278,387.5L279,387.5L279,389.5L280,389.5L280,381.5L281,381.5L281,388.5L282,388.5L282,381.3L283,381.3L283,381.3L284,381.3L284,389.1L285,389.1L285,388.5L286,388.5L286,383.6L287,383.6L287,387.7L288,387.7L288,390.6L289,390.6L289,379.4L290,379.4L290,386.0L291,386.0L291,383.4L292,383.4L292,378.3L293,378.3L293,387.1L294,387.1L294,384.7L295,384.7L295,374.7L296,374.7L296,382.4L297,382.4L297,384.2L298,384.2L298,388.5L299,388.5L299,390.5L300,390.5L300,382.6L301,382.6L301,383.6L302,383.6L302,379.4L303,379.4L303,380.7L304,380.7L304,390.3L305,390.3L305,388.0L306,388.0L306,384.0L307,384.0L307,386.8L308,386.8L308,382.0L309,382.0L309,379.8L310,379.8L310,378.9L311,378.9L311,381.4L312,381.4L312,380.5L313,380.5L313,379.8L314,379.8L314,381.2L315,381.2L315,386.2L316,386.2L316,388.4L317,388.4L317,384.5L318,384.5L318,384.0L319,384.0L319,382.6L320,382.6L320,385.0L321,385.0L321,385.8L322,385.8L322,379.3L323,379.3L323,386.2L324,386.2L324,384.1L325,384.1L325,384.0L326,384.0L326,380.8L327,380.8L327,385.0L328,385.0L328,388.3L329,388.3L329,385.8L330,385.8L330,390.6L331,390.6L331,388.8L332,388.8L332,385.0L333,385.0L333,385.7L334,385.7L334,390.3L335,390.3L335,378.0L336,378.0L336,388.2L337,388.2L337,384.8L338,384.8L338,382.9L339,382.9L339,382.8L340,382.8L340,387.4L341,387.4L341,384.9L342,384.9L342,387.1L343,387.1L343,387.5L344,387.5L344,382.8L345,382.8L345,389.8L346,389.8L346,378.4L347,378.4L347,387.5L348,387.5L348,385.5L349,385.5L349,382.5L350,382.5L350,388.4L351,388.4L351,384.8L352,384.8L352,379.1L353,379.1L353,390.6L354,390.6L354,383.1L355,383.1L355,389.9L356,389.9L356,380.0L357,380.0L357,385.9L358,385.9L358,382.2L359,382.2L359,388.7L360,388.7L360,381.5L361,381.5L361,383.8L362,383.8L362,386.3L363,386.3L363,388.0L364,388.0L364,384.8L365,384.8L365,388.8L366,388.8L366,383.1L367,383.1L367,386.0L368,386.0L368,389.0L369,389.0L369,390.7L370,390.7L370,381.1L371,381.1L371,67.0L372,67.0L372,178.0L373,178.0L373,192.0L374,192.0L374,194.0L375,194.0L375,190.0L376,190.0L376,166.0L377,166.0L377,170.0L378,170.0L378,188.0L379,188.0L379,176.0L380,176.0L380,164.0L381,164.0L381,200.0L382,200.0L382,218.0L383,218.0L383,216.0L384,216.0L384,206.0L385,206.0L385,196.0L386,196.0L386,239.0L387,239.0L387,234.1L388,234.1L388,236.1L389,236.1L389,236.0L390,236.0L390,251.2L391,251.2L391,246.9L392,246.9L392,257.2L393,257.2L393,258.7L394,258.7L394,254.0L395,254.0L395,268.1L396,268.1L396,253.0L397,253.0L397,271.3L398,271.3L398,263.9L399,263.9L399,275.6L400,275.6L400,267.7L401,267.7L401,264.0L402,264.0L402,285.0L403,285.0L403,273.0L404,273.0L404,272.3L405,272.3L405,283.6L406,283.6L406,281.9L407,281.9L407,283.6L408,283.6L408,277.0L409,277.0L409,300.1L410,300.1L410,303.3L411,303.3L411,296.6L412,296.6L412,304.9L413,304.9L413,308.1L414,308.1L414,308.0L415,308.0L415,303.5L416,303.5L416,302.2L417,302.2L417,312.6L418,312.6L418,300.0L419,300.0L419,314.8L420,314.8L420,305.4L421,305.4L421,307.4L422,307.4L422,317.4L423,317.4L423,313.0L424,313.0L424,326.0L425,326.0L425,304.0L426,304.0L426,335.9L427,335.9L427,320.0L428,320.0L428,324.9L429,324.9L429,338.6L430,338.6L430,318.1L431,318.1L431,336.5L432,336.5L432,342.8L433,342.8L433,323.9L434,323.9L434,327.0L435,327.0L435,336.3L436,336.3L436,339.8L437,339.8L437,324.0L438,324.0L438,330.5L439,330.5L439,332.0L440,332.0L440,338.8L441,338.8L441,333.7L442,333.7L442,353.7L443,353.7L443,357.1L444,357.1L444,346.1L445,346.1L445,352.6L446,352.6L446,362.7L447,362.7L447,359.7L448,359.7L448,359.2L449,359.2L449,349.9L450,349.9L450,365.7L451,365.7L451,360.4L452,360.4L452,366.6L453,366.6L453,355.0L454,355.0L454,348.4L455,348.4L455,364.9L456,364.9L456,367.0L457,367.0L457,363.4L458,363.4L458,367.9L459,367.9L459,370.2L460,370.2L460,357.9L461,357.9L461,371.5L462,371.5L462,358.0L463,358.0L463,368.5L464,368.5L464,371.6L465,371.6L465,365.2L466,365.2L466,361.7L467,361.7L467,358.9L468,358.9L468,380.3L469,380.3L469,371.5L470,371.5L470,381.3L471,381.3L471,380.1L472,380.1L472,378.3L473,378.3L473,383.5L474,383.5L474,376.5L475,376.5L475,372.6L476,372.6L476,383.0L477,383.0L477,375.9L478,375.9L478,380.0L479,380.0L479,379.7L480,379.7L480,377.6L481,377.6L481,374.5L482,374.5L482,380.3L483,380.3L483,374.5L484,374.5L484,379.0L485,379.0L485,380.3L486,380.3L486,384.8L487,384.8L487,374.5L488,374.5L488,382.3L489,382.3L489,381.9L490,381.9L490,382.1L491,382.1L491,386.0L492,386.0L492,381.2L493,381.2L493,377.0L494,377.0L494,376.0L495,376.0L495,387.6L496,387.6L496,381.0L497,381.0L497,384.4L498,384.4L498,376.4L499,376.4L499,379.5L500,379.5L500,381.5L501,381.5L501,375.9L502,375.9L502,385.5L503,385.5L503,385.7L504,385.7L504,377.6L505,377.6L505,384.6L506,384.6L506,376.2L507,376.2L507,383.1L508,383.1L508,386.4L509,386.4L509,375.9L510,375.9L510,385.2L511,385.2L511,387.0L512,387.0L512,378.9L513,378.9L513,380.3L514,380.3L514,387.9L515,387.9L515,372.0L516,372.0L516,382.1L517,382.1L517,377.2L518,377.2L518,376.4L519,376.4L519,377.1L520,377.1L520,376.1L521,376.1L521,380.2L522,380.2L522,387.4L523,387.4L523,385.9L524,385.9L524,378.1L525,378.1L525,387.4L526,387.4L526,381.6L527,381.6L527,386.7L528,386.7L528,376.1L529,376.1L529,386.5L530,386.5L530,386.5L531,386.5L531,377.0L532,377.0L532,385.7L533,385.7L533,376.0L534,376.0L534,385.1L535,385.1L535,376.5L536,376.5L536,379.5L537,379.5L537,387.8L538,387.8L538,379.0L539,379.0L539,381.2L540,381.2L540,381.5L541,381.5L541,381.6L542,381.6L542,385.7L543,385.7L543,376.7L544,376.7L544,385.9L545,385.9L545,377.8L546,377.8L546,384.9L547,384.9L547,387.5L548,387.5L548,383.1L549,383.1L549,379.4L550,379.4L550,378.4L551,378.4L551,379.7L552,379.7L552,378.7L553,378.7L553,381.5L554,381.5L554,386.4L555,386.4L555,384.2L556,384.2L556,383.6L557,383.6L557,383.8L558,383.8L558,376.0L559,376.0L559,377.5L560,377.5L560,384.7L561,384.7L561,384.9L562,384.9L562,382.0L563,382.0L563,384.0L564,384.0L564,384.7L565,384.7L565,382.6L566,382.6L566,381.6L567,381.6L567,375.9L568,375.9L568,382.7L569,382.7L569,387.4L570,387.4L570,377.6L571,377.6L571,387.5L572,387.5L572,383.5L573,383.5L573,383.7L574,383.7L574,381.4L575,381.4L575,382.9L576,382.9L576,379.3L577,379.3L577,384.5L578,384.5L578,383.3L579,383.3L579,380.1L580,380.1L580,380.9L581,380.9L581,385.6L582,385.6L582,380.5L583,380.5L583,387.3L584,387.3L584,379.1L585,379.1L585,376.6L586,376.6L586,379.0L587,379.0L587,377.7L588,377.7L588,382.7L589,382.7L589,386.8L590,386.8L590,383.6L591,383.6L591,377.0L592,377.0L592,386.0L593,386.0L593,380.7L594,380.7L594,388.1L595,388.1L595,388.3L596,388.3L596,386.1L597,386.1L597,383.4L598,383.4L598,382.9L599,382.9L599,379.9L600,379.9L600,387.2L601,387.2L601,379.5L602,379.5L602,382.8L603,382.8L603,372.6L604,372.6L604,382.3L605,382.3L605,376.9L606,376.9L606,384.2L607,384.2L607,380.9L608,380.9L608,385.9L609,385.9L609,387.3L610,387.3L610,388.2L611,388.2L611,381.7L612,381.7L612,387.4L613,387.4L613,382.4L614,382.4L614,381.5L615,381.5L615,375.7L616,375.7L616,381.6L617,381.6L617,384.6L618,384.6L618,386.8L619,386.8L619,380.4L620,380.4L620,378.5L621,378.5L621,377.3L622,377.3L622,380.7L623,380.7L623,384.5L624,384.5L624,377.1L625,377.1L625,377.8L626,377.8L626,387.0L627,387.0L627,383.4L628,383.4L628,380.6L629,380.6L629,383.5L630,383.5L630,372.6L631,372.6L631,383.5L632,383.5L632,385.3L633,385.3L633,379.4L634,379.4L634,387.2L635,387.2L635,382.8L636,382.8L636,385.4L637,385.4L637,385.8L638,385.8L638,380.5L639,380.5L639,378.7L640,378.7L640,381.5L641,381.5L641,380.3L642,380.3L642,387.9L643,387.9L643,377.2L644,377.2L644,380.9L645,380.9L645,376.7L646,376.7L646,385.7L647,385.7L647,375.5L648,375.5L648,375.3L649,375.3L649,386.3L650,386.3L650,384.2L651,384.2L651,380.9L652,380.9L652,381.6L653,381.6L653,382.3L654,382.3L654,377.1L655,377.1L655,382.1L656,382.1L656,377.6L657,377.6L657,387.5L658,387.5L658,381.3L659,381.3L659,376.7L660,376.7L660,381.4L661,381.4L661,377.4L662,377.4L662,378.4L663,378.4L663,378.8L664,378.8L664,382.3L665,382.3L665,385.4L666,385.4L666,381.1L667,381.1L667,387.3L668,387.3L668,384.5L669,384.5L669,386.5L670,386.5L670,386.2L671,386.2L671,381.0L672,381.0L672,388.1L673,388.1L673,386.1L674,386.1L674,386.6L675,386.6L675,381.5L676,381.5L676,376.9L677,376.9L677,379.0L678,379.0L678,384.6L679,384.6L679,387.3L680,387.3L680,382.3L681,382.3L681,385.3L682,385.3L682,386.3L683,386.3L683,381.9L684,381.9L684,385.8L685,385.8L685,378.0L686,378.0L686,376.4L687,376.4L687,379.2L688,379.2L688,385.8L689,385.8L689,375.4L690,375.4L690,378.4L691,378.4L691,379.7L692,379.7L692,381.9L693,381.9L693,376.8L694,376.8L694,381.9L695,381.9L695,383.0L696,383.0L696,385.4L697,385.4L697,380.8L698,380.8L698,388.3L699,388.3L699,380.0L700,380.0L700,378.4L701,378.4L701,375.7L702,375.7L702,378.8L703,378.8L703,388.4L704,388.4L704,378.6L705,378.6L705,386.2L706,386.2L706,375.3L707,375.3L707,382.3L708,382.3L708,387.0L709,387.0L709,379.7L710,379.7L710,386.9L711,386.9L711,380.4L712,380.4L712,383.8L713,383.8L713,378.2L714,378.2L714,382.8L715,382.8L715,380.6L716,380.6L716,375.0L717,375.0L717,379.4L718,379.4L718,388.7L719,388.7L719,384.6L720,384.6L720,387.8L721,387.8L721,383.8L722,383.8L722,383.0L723,383.0L723,384.7L724,384.7L724,382.9L725,382.9L725,384.4L726,384.4L726,383.5L727,383.5L727,384.9L728,384.9L728,381.7L729,381.7L729,382.1L730,382.1L730,384.6L731,384.6L731,381.4L732,381.4L732,378.7L733,378.7L733,380.1L734,380.1L734,382.1L735,382.1L735,378.1L736,378.1L736,382.4L737,382.4L737,376.4L738,376.4L738,380.7L739,380.7L739,387.7L740,387.7L740,387.1L741,387.1L741,375.5L742,375.5L742,382.5L743,382.5L743,386.0L744,386.0L744,378.3L745,378.3L745,389.4L746,389.4L746,377.3L747,377.3L747,388.9L748,388.9L748,385.3L749,385.3L749,385.3L750,385.3L750,387.7L751,387.7L751,388.3L752,388.3L752,389.0L753,389.0L753,386.9L754,386.9L754,379.2L755,379.2L755,378.8L756,378.8L756,380.8L757,380.8L757,380.2L758,380.2L758,372.8L759,372.8L759,380.2L760,380.2L760,383.8L761,383.8L761,381.8L762,381.8L762,383.2L763,383.2L763,389.3L764,389.3L764,379.4L765,379.4L765,383.1L766,383.1L766,384.7L767,384.7L767,379.3L768,379.3L768,383.1L769,383.1L769,380.9L770,380.9L770,381.6L771,381.6L771,386.4L772,386.4L772,388.4L773,388.4L773,382.8L774,382.8L774,377.5L775,377.5L775,385.1L776,385.1L776,389.3L777,389.3L777,379.3L778,379.3L778,379.7L779,379.7L779,386.8L780,386.8L780,387.1L781,387.1L781,380.9L782,380.9L782,388.5L783,388.5L783,383.2L784,383.2L784,382.9L785,382.9L785,387.1L786,387.1L786,380.9L787,380.9L787,377.2L788,377.2L788,377.5L789,377.5L789,380.0L790,380.0L790,388.1L791,388.1L791,377.5L792,377.5L792,381.9L793,381.9L793,386.2L794,386.2L794,377.7L795,377.7L795,388.5L796,388.5L796,379.0L797,379.0L797,386.3L798,386.3L798,377.8L799,377.8L799,390.6L800,390.6L800,386.6L801,386.6L801,377.4L802,377.4L802,390.0L803,390.0L803,387.9L804,387.9L804,378.3L805,378.3L805,378.9L806,378.9L806,387.4L807,387.4L807,384.1L808,384.1L808,386.2L809,386.2L809,387.7L810,387.7L810,378.9L811,378.9L811,380.6L812,380.6L812,388.7L813,388.7L813,390.1L814,390.1L814,379.7L815,379.7L815,384.7L816,384.7L816,379.1L817,379.1L817,389.0L818,389.0L818,379.6L819,379.6L819,380.0L820,380.0L820,383.7L821,383.7L821,380.5L822,380.5L822,388.4L823,388.4L823,385.0L824,385.0L824,391.7L825,391.7L825,393.2L826,393.2L826,388.8L827,388.8L827,389.1L828,389.1L828,389.4L829,389.4L829,388.2L830,388.2L830,389.9L831,389.9L831,383.2L832,383.2L832,383.4L833,383.4L833,392.6L834,392.6L834,382.5L835,382.5L835,389.1L836,389.1L836,382.8L837,382.8L837,389.6L838,389.6L838,394.6L839,394.6L839,388.2L840,388.2L840,388.7L841,388.7L841,385.1L842,385.1L842,381.5L843,381.5L843,383.2L844,383.2L844,384.3L845,384.3L845,394.4L846,394.4L846,383.9L847,383.9L847,383.4L848,383.4L848,395.1L849,395.1L849,394.4L850,394.4L850,389.7L851,389.7L851,385.0L852,385.0L852,386.7L853,386.7L853,388.6L854,388.6L854,383.9L855,383.9L855,395.3L856,395.3L856,392.7L857,392.7L857,396.3L858,396.3L858,381.2L859,381.2L859,383.8L860,383.8L860,387.1L861,387.1L861,388.4L862,388.4L862,383.5L863,383.5L863,389.8L864,389.8L864,394.4L865,394.4L865,395.7L866,395.7L866,391.4L867,391.4L867,388.3L868,388.3L868,387.6L869,387.6L869,385.9L870,385.9L870,394.7L871,394.7L871,385.5L872,385.5L872,392.8L873,392.8L873,388.6L874,388.6L874,393.8L875,393.8L875,387.8L876,387.8L876,397.7L877,397.7L877,388.7L878,388.7L878,393.3L879,393.3L879,393.1L880,393.1L880,397.8L881,397.8L881,391.0L882,391.0L882,386.2L883,386.2L883,393.2L884,393.2L884,391.3L885,391.3L885,392.9L886,392.9L886,393.1L887,393.1L887,397.4L888,397.4L888,396.1L889,396.1L889,399.4L890,399.4L890,394.3L891,394.3L891,397.8L892,397.8L892,398.9L893,398.9L893,388.9L894,388.9L894,398.2L895,398.2L895,394.8L896,394.8L896,397.2L897,397.2L897,390.0L898,390.0L898,401.5L899,401.5L899,387.8L900,387.8L900,397.3L901,397.3L901,393.1L902,393.1L902,395.0L903,395.0L903,394.9L904,394.9L904,401.3L905,401.3L905,397.3L906,397.3L906,394.4L907,394.4L907,400.4L908,400.4L908,390.8L909,390.8L909,399.5L910,399.5L910,387.4L911,387.4L911,399.9L912,399.9L912,401.2L913,401.2L913,399.8L914,399.8L914,391.9L915,391.9L915,401.4L916,401.4L916,386.1L917,386.1L917,391.9L918,391.9L918,393.9L919,393.9L919,390.2L920,390.2L920,399.6L921,399.6L921,401.5L922,401.5L922,402.8L923,402.8L923,398.6L924,398.6L924,393.6L925,393.6L925,388.2L926,388.2L926,399.3L927,399.3L927,395.2L928,395.2L928,394.3L929,394.3L929,395.0L930,395.0L930,397.7L931,397.7L931,393.5L932,393.5L932,400.0L933,400.0L933,401.9L934,401.9L934,405.2L935,405.2L935,398.5L936,398.5L936,397.4L937,397.4L937,392.0L938,392.0L938,397.3L939,397.3L939,393.3L940,393.3L940,394.1L941,394.1L941,391.9L942,391.9L942,400.4L943,400.4L943,396.9L944,396.9L944,395.5L945,395.5L945,394.6L946,394.6L946,402.0L947,402.0L947,397.1L948,397.1L948,398.6L949,398.6L949,397.5L950,397.5L950,402.6L951,402.6L951,394.3L952,394.3L952,402.9L953,402.9L953,396.7L954,396.7L954,474.8Z" fill="#b40000"/>
<line x1="35" x2="954" y1="248.5" y2="248.5" stroke="#8a0000" stroke-width="1" clip-path="url(#wf)"/>
<path d="M35,387.9L35,387.9L36,387.9L36,386.2L37,386.2L37,379.8L38,379.8L38,380.1L39,380.1L39,388.0L40,388.0L40,384.9L41,384.9L41,384.8L42,384.8L42,389.0L43,389.0L43,379.7L44,379.7L44,381.4L45,381.4L45,390.2L46,390.2L46,383.3L47,383.3L47,390.6L48,390.6L48,384.9L49,384.9L49,379.6L50,379.6L50,379.0L51,379.0L51,370.0L52,370.0L52,380.6L53,380.6L53,378.8L54,378.8L54,389.7L55,389.7L55,388.2L56,388.2L56,385.3L57,385.3L57,387.1L58,387.1L58,386.0L59,386.0L59,383.4L60,383.4L60,379.2L61,379.2L61,378.9L62,378.9L62,378.1L63,378.1L63,388.9L64,388.9L64,378.5L65,378.5L65,383.6L66,383.6L66,388.3L67,388.3L67,383.5L68,383.5L68,390.2L69,390.2L69,378.1L70,378.1L70,380.6L71,380.6L71,389.0L72,389.0L72,381.0L73,381.0L73,390.4L74,390.4L74,390.4L75,390.4L75,386.7L76,386.7L76,378.3L77,378.3L77,378.0L78,378.0L78,390.0L79,390.0L79,390.6L80,390.6L80,385.7L81,385.7L81,381.6L82,381.6L82,386.9L83,386.9L83,379.3L84,379.3L84,385.0L85,385.0L85,382.6L86,382.6L86,383.7L87,383.7L87,378.8L88,378.8L88,385.4L89,385.4L89,387.9L90,387.9L90,378.3L91,378.3L91,378.8L92,378.8L92,377.4L93,377.4L93,376.6L94,376.6L94,384.9L95,384.9L95,386.4L96,386.4L96,378.1L97,378.1L97,382.2L98,382.2L98,387.7L99,387.7L99,383.3L100,383.3L100,386.3L101,386.3L101,386.2L102,386.2L102,387.1L103,387.1L103,375.1L104,375.1L104,381.4L105,381.4L105,388.1L106,388.1L106,387.9L107,387.9L107,385.3L108,385.3L108,389.7L109,389.7L109,386.7L110,386.7L110,385.3L111,385.3L111,388.8L112,388.8L112,382.5L113,382.5L113,385.1L114,385.1L114,389.4L115,389.4L115,388.5L116,388.5L116,380.1L117,380.1L117,387.4L118,387.4L118,382.7L119,382.7L119,386.5L120,386.5L120,387.2L121,387.2L121,387.5L122,387.5L122,385.6L123,385.6L123,385.7L124,385.7L124,381.3L125,381.3L125,379.6L126,379.6L126,385.4L127,385.4L127,378.9L128,378.9L128,381.3L129,381.3L129,382.4L130,382.4L130,387.2L131,387.2L131,382.1L132,382.1L132,387.3L133,387.3L133,390.4L134,390.4L134,382.0L135,382.0L135,379.3L136,379.3L136,376.8L137,376.8L137,388.8L138,388.8L138,382.4L139,382.4L139,385.6L140,385.6L140,383.0L141,383.0L141,387.7L142,387.7L142,384.8L143,384.8L143,386.4L144,386.4L144,384.0L145,384.0L145,388.8L146,388.8L146,379.0L147,379.0L147,374.2L148,374.2L148,375.4L149,375.4L149,386.0L150,386.0L150,317.0L151,317.0L151,386.0L152,386.0L152,387.5L153,387.5L153,385.5L154,385.5L154,377.6L155,377.6L155,389.4L156,389.4L156,390.1L157,390.1L157,379.9L158,379.9L158,384.5L159,384.5L159,386.9L160,386.9L160,382.6L161,382.6L161,386.3L162,386.3L162,386.7L163,386.7L163,372.0L164,372.0L164,383.8L165,383.8L165,386.1L166,386.1L166,388.7L167,388.7L167,383.1L168,383.1L168,386.1L169,386.1L169,382.9L170,382.9L170,386.2L171,386.2L171,381.9L172,381.9L172,382.0L173,382.0L173,387.8L174,387.8L174,382.0L175,382.0L175,385.5L176,385.5L176,379.6L177,379.6L177,386.1L178,386.1L178,380.7L179,380.7L179,385.0L180,385.0L180,380.4L181,380.4L181,379.5L182,379.5L182,382.3L183,382.3L183,383.7L184,383.7L184,379.6L185,379.6L185,377.5L186,377.5L186,389.7L187,389.7L187,381.5L188,381.5L188,389.4L189,389.4L189,382.2L190,382.2L190,378.6L191,378.6L191,373.8L192,373.8L192,384.4L193,384.4L193,389.6L194,389.6L194,374.2L195,374.2L195,383.7L196,383.7L196,387.9L197,387.9L197,387.8L198,387.8L198,381.2L199,381.2L199,386.2L200,386.2L200,386.4L201,386.4L201,389.9L202,389.9L202,378.4L203,378.4L203,381.3L204,381.3L204,382.0L205,382.0L205,382.2L206,382.2L206,384.7L207,384.7L207,379.3L208,379.3L208,389.8L209,389.8L209,379.1L210,379.1L210,385.2L211,385.2L211,388.6L212,388.6L212,388.4L213,388.4L213,386.9L214,386.9L214,382.0L215,382.0L215,387.2L216,387.2L216,385.6L217,385.6L217,383.4L218,383.4L218,382.8L219,382.8L219,386.0L220,386.0L220,386.3L221,386.3L221,380.9L222,380.9L222,378.1L223,378.1L223,383.2L224,383.2L224,380.2L225,380.2L225,383.8L226,383.8L226,381.6L227,381.6L227,385.8L228,385.8L228,378.5L229,378.5L229,388.0L230,388.0L230,381.7L231,381.7L231,378.5L232,378.5L232,357.0L233,357.0L233,387.9L234,387.9L234,387.6L235,387.6L235,381.8L236,381.8L236,379.3L237,379.3L237,379.8L238,379.8L238,385.5L239,385.5L239,389.9L240,389.9L240,380.2L241,380.2L241,386.4L242,386.4L242,377.5L243,377.5L243,385.3L244,385.3L244,388.3L245,388.3L245,378.6L246,378.6L246,383.9L247,383.9L247,387.4L248,387.4L248,389.5L249,389.5L249,379.2L250,379.2L250,378.8L251,378.8L251,381.0L252,381.0L252,387.2L253,387.2L253,382.5L254,382.5L254,387.5L255,387.5L255,378.5L256,378.5L256,384.0L257,384.0L257,384.6L258,384.6L258,381.7L259,381.7L259,383.6L260,383.6L260,382.6L261,382.6L261,388.7L262,388.7L262,382.5L263,382.5L263,378.9L264,378.9L264,386.7L265,386.7L265,383.2L266,383.2L266,382.6L267,382.6L267,386.9L268,386.9L268,390.1L269,390.1L269,381.2L270,381.2L270,381.4L271,381.4L271,387.5L272,387.5L272,374.1L273,374.1L273,387.8L274,387.8L274,386.4L275,386.4L275,385.8L276,385.8L276,381.0L277,381.0L277,380.0L278,380.0L278,387.5L279,387.5L279,389.5L280,389.5L280,381.5L281,381.5L281,388.5L282,388.5L282,381.3L283,381.3L283,381.3L284,381.3L284,389.1L285,389.1L285,388.5L286,388.5L286,383.6L287,383.6L287,387.7L288,387.7L288,390.6L289,390.6L289,379.4L290,379.4L290,386.0L291,386.0L291,383.4L292,383.4L292,378.3L293,378.3L293,387.1L294,387.1L294,384.7L295,384.7L295,374.7L296,374.7L296,382.4L297,382.4L297,384.2L298,384.2L298,388.5L299,388.5L299,390.5L300,390.5L300,382.6L301,382.6L301,383.6L302,383.6L302,379.4L303,379.4L303,380.7L304,380.7L304,390.3L305,390.3L305,388.0L306,388.0L306,384.0L307,384.0L307,386.8L308,386.8L308,382.0L309,382.0L309,379.8L310,379.8L310,378.9L311,378.9L311,381.4L312,381.4L312,380.5L313,380.5L313,379.8L314,379.8L314,381.2L315,381.2L315,386.2L316,386.2L316,388.4L317,388.4L317,384.5L318,384.5L318,384.0L319,384.0L319,382.6L320,382.6L320,385.0L321,385.0L321,385.8L322,385.8L322,379.3L323,379.3L323,386.2L324,386.2L324,384.1L325,384.1L325,384.0L326,384.0L326,380.8L327,380.8L327,385.0L328,385.0L328,388.3L329,388.3L329,385.8L330,385.8L330,390.6L331,390.6L331,388.8L332,388.8L332,385.0L333,385.0L333,385.7L334,385.7L334,390.3L335,390.3L335,378.0L336,378.0L336,388.2L337,388.2L337,384.8L338,384.8L338,382.9L339,382.9L339,382.8L340,382.8L340,387.4L341,387.4L341,384.9L342,384.9L342,387.1L343,387.1L343,387.5L344,387.5L344,382.8L345,382.8L345,389.8L346,389.8L346,378.4L347,378.4L347,387.5L348,387.5L348,385.5L349,385.5L349,382.5L350,382.5L350,388.4L351,388.4L351,384.8L352,384.8L352,379.1L353,379.1L353,390.6L354,390.6L354,383.1L355,383.1L355,389.9L356,389.9L356,380.0L357,380.0L357,385.9L358,385.9L358,382.2L359,382.2L359,388.7L360,388.7L360,381.5L361,381.5L361,383.8L362,383.8L362,386.3L363,386.3L363,388.0L364,388.0L364,384.8L365,384.8L365,388.8L366,388.8L366,383.1L367,383.1L367,386.0L368,386.0L368,389.0L369,389.0L369,390.7L370,390.7L370,381.1L371,381.1L371,67.0L372,67.0L372,178.0L373,178.0L373,192.0L374,192.0L374,194.0L375,194.0L375,190.0L376,190.0L376,166.0L377,166.0L377,170.0L378,170.0L378,188.0L379,188.0L379,176.0L380,176.0L380,164.0L381,164.0L381,200.0L382,200.0L382,218.0L383,218.0L383,216.0L384,216.0L384,206.0L385,206.0L385,196.0L386,196.0L386,239.0L387,239.0L387,234.1L388,234.1L388,236.1L389,236.1L389,236.0L390,236.0L390,251.2L391,251.2L391,246.9L392,246.9L392,257.2L393,257.2L393,258.7L394,258.7L394,254.0L395,254.0L395,268.1L396,268.1L396,253.0L397,253.0L397,271.3L398,271.3L398,263.9L399,263.9L399,275.6L400,275.6L400,267.7L401,267.7L401,264.0L402,264.0L402,285.0L403,285.0L403,273.0L404,273.0L404,272.3L405,272.3L405,283.6L406,283.6L406,281.9L407,281.9L407,283.6L408,283.6L408,277.0L409,277.0L409,300.1L410,300.1L410,303.3L411,303.3L411,296.6L412,296.6L412,304.9L413,304.9L413,308.1L414,308.1L414,308.0L415,308.0L415,303.5L416,303.5L416,302.2L417,302.2L417,312.6L418,312.6L418,300.0L419,300.0L419,314.8L420,314.8L420,305.4L421,305.4L421,307.4L422,307.4L422,317.4L423,317.4L423,313.0L424,313.0L424,326.0L425,326.0L425,304.0L426,304.0L426,335.9L427,335.9L427,320.0L428,320.0L428,324.9L429,324.9L429,338.6L430,338.6L430,318.1L431,318.1L431,336.5L432,336.5L432,342.8L433,342.8L433,323.9L434,323.9L434,327.0L435,327.0L435,336.3L436,336.3L436,339.8L437,339.8L437,324.0L438,324.0L438,330.5L439,330.5L439,332.0L440,332.0L440,338.8L441,338.8L441,333.7L442,333.7L442,353.7L443,353.7L443,357.1L444,357.1L444,346.1L445,346.1L445,352.6L446,352.6L446,362.7L447,362.7L447,359.7L448,359.7L448,359.2L449,359.2L449,349.9L450,349.9L450,365.7L451,365.7L451,360.4L452,360.4L452,366.6L453,366.6L453,355.0L454,355.0L454,348.4L455,348.4L455,364.9L456,364.9L456,367.0L457,367.0L457,363.4L458,363.4L458,367.9L459,367.9L459,370.2L460,370.2L460,357.9L461,357.9L461,371.5L462,371.5L462,358.0L463,358.0L463,368.5L464,368.5L464,371.6L465,371.6L465,365.2L466,365.2L466,361.7L467,361.7L467,358.9L468,358.9L468,380.3L469,380.3L469,371.5L470,371.5L470,381.3L471,381.3L471,380.1L472,380.1L472,378.3L473,378.3L473,383.5L474,383.5L474,376.5L475,376.5L475,372.6L476,372.6L476,383.0L477,383.0L477,375.9L478,375.9L478,380.0L479,380.0L479,379.7L480,379.7L480,377.6L481,377.6L481,374.5L482,374.5L482,380.3L483,380.3L483,374.5L484,374.5L484,379.0L485,379.0L485,380.3L486,380.3L486,384.8L487,384.8L487,374.5L488,374.5L488,382.3L489,382.3L489,381.9L490,381.9L490,382.1L491,382.1L491,386.0L492,386.0L492,381.2L493,381.2L493,377.0L494,377.0L494,376.0L495,376.0L495,387.6L496,387.6L496,381.0L497,381.0L497,384.4L498,384.4L498,376.4L499,376.4L499,379.5L500,379.5L500,381.5L501,381.5L501,375.9L502,375.9L502,385.5L503,385.5L503,385.7L504,385.7L504,377.6L505,377.6L505,384.6L506,384.6L506,376.2L507,376.2L507,383.1L508,383.1L508,386.4L509,386.4L509,375.9L510,375.9L510,385.2L511,385.2L511,387.0L512,387.0L512,378.9L513,378.9L513,380.3L514,380.3L514,387.9L515,387.9L515,372.0L516,372.0L516,382.1L517,382.1L517,377.2L518,377.2L518,376.4L519,376.4L519,377.1L520,377.1L520,376.1L521,376.1L521,380.2L522,380.2L522,387.4L523,387.4L523,385.9L524,385.9L524,378.1L525,378.1L525,387.4L526,387.4L526,381.6L527,381.6L527,386.7L528,386.7L528,376.1L529,376.1L529,386.5L530,386.5L530,386.5L531,386.5L531,377.0L532,377.0L532,385.7L533,385.7L533,376.0L534,376.0L534,385.1L535,385.1L535,376.5L536,376.5L536,379.5L537,379.5L537,387.8L538,387.8L538,379.0L539,379.0L539,381.2L540,381.2L540,381.5L541,381.5L541,381.6L542,381.6L542,385.7L543,385.7L543,376.7L544,376.7L544,385.9L545,385.9L545,377.8L546,377.8L546,384.9L547,384.9L547,387.5L548,387.5L548,383.1L549,383.1L549,379.4L550,379.4L550,378.4L551,378.4L551,379.7L552,379.7L552,378.7L553,378.7L553,381.5L554,381.5L554,386.4L555,386.4L555,384.2L556,384.2L556,383.6L557,383.6L557,383.8L558,383.8L558,376.0L559,376.0L559,377.5L560,377.5L560,384.7L561,384.7L561,384.9L562,384.9L562,382.0L563,382.0L563,384.0L564,384.0L564,384.7L565,384.7L565,382.6L566,382.6L566,381.6L567,381.6L567,375.9L568,375.9L568,382.7L569,382.7L569,387.4L570,387.4L570,377.6L571,377.6L571,387.5L572,387.5L572,383.5L573,383.5L573,383.7L574,383.7L574,381.4L575,381.4L575,382.9L576,382.9L576,379.3L577,379.3L577,384.5L578,384.5L578,383.3L579,383.3L579,380.1L580,380.1L580,380.9L581,380.9L581,385.6L582,385.6L582,380.5L583,380.5L583,387.3L584,387.3L584,379.1L585,379.1L585,376.6L586,376.6L586,379.0L587,379.0L587,377.7L588,377.7L588,382.7L589,382.7L589,386.8L590,386.8L590,383.6L591,383.6L591,377.0L592,377.0L592,386.0L593,386.0L593,380.7L594,380.7L594,388.1L595,388.1L595,388.3L596,388.3L596,386.1L597,386.1L597,383.4L598,383.4L598,382.9L599,382.9L599,379.9L600,379.9L600,387.2L601,387.2L601,379.5L602,379.5L602,382.8L603,382.8L603,372.6L604,372.6L604,382.3L605,382.3L605,376.9L606,376.9L606,384.2L607,384.2L607,380.9L608,380.9L608,385.9L609,385.9L609,387.3L610,387.3L610,388.2L611,388.2L611,381.7L612,381.7L612,387.4L613,387.4L613,382.4L614,382.4L614,381.5L615,381.5L615,375.7L616,375.7L616,381.6L617,381.6L617,384.6L618,384.6L618,386.8L619,386.8L619,380.4L620,380.4L620,378.5L621,378.5L621,377.3L622,377.3L622,380.7L623,380.7L623,384.5L624,384.5L624,377.1L625,377.1L625,377.8L626,377.8L626,387.0L627,387.0L627,383.4L628,383.4L628,380.6L629,380.6L629,383.5L630,383.5L630,372.6L631,372.6L631,383.5L632,383.5L632,385.3L633,385.3L633,379.4L634,379.4L634,387.2L635,387.2L635,382.8L636,382.8L636,385.4L637,385.4L637,385.8L638,385.8L638,380.5L639,380.5L639,378.7L640,378.7L640,381.5L641,381.5L641,380.3L642,380.3L642,387.9L643,387.9L643,377.2L644,377.2L644,380.9L645,380.9L645,376.7L646,376.7L646,385.7L647,385.7L647,375.5L648,375.5L648,375.3L649,375.3L649,386.3L650,386.3L650,384.2L651,384.2L651,380.9L652,380.9L652,381.6L653,381.6L653,382.3L654,382.3L654,377.1L655,377.1L655,382.1L656,382.1L656,377.6L657,377.6L657,387.5L658,387.5L658,381.3L659,381.3L659,376.7L660,376.7L660,381.4L661,381.4L661,377.4L662,377.4L662,378.4L663,378.4L663,378.8L664,378.8L664,382.3L665,382.3L665,385.4L666,385.4L666,381.1L667,381.1L667,387.3L668,387.3L668,384.5L669,384.5L669,386.5L670,386.5L670,386.2L671,386.2L671,381.0L672,381.0L672,388.1L673,388.1L673,386.1L674,386.1L674,386.6L675,386.6L675,381.5L676,381.5L676,376.9L677,376.9L677,379.0L678,379.0L678,384.6L679,384.6L679,387.3L680,387.3L680,382.3L681,382.3L681,385.3L682,385.3L682,386.3L683,386.3L683,381.9L684,381.9L684,385.8L685,385.8L685,378.0L686,378.0L686,376.4L687,376.4L687,379.2L688,379.2L688,385.8L689,385.8L689,375.4L690,375.4L690,378.4L691,378.4L691,379.7L692,379.7L692,381.9L693,381.9L693,376.8L694,376.8L694,381.9L695,381.9L695,383.0L696,383.0L696,385.4L697,385.4L697,380.8L698,380.8L698,388.3L699,388.3L699,380.0L700,380.0L700,378.4L701,378.4L701,375.7L702,375.7L702,378.8L703,378.8L703,388.4L704,388.4L704,378.6L705,378.6L705,386.2L706,386.2L706,375.3L707,375.3L707,382.3L708,382.3L708,387.0L709,387.0L709,379.7L710,379.7L710,386.9L711,386.9L711,380.4L712,380.4L712,383.8L713,383.8L713,378.2L714,378.2L714,382.8L715,382.8L715,380.6L716,380.6L716,375.0L717,375.0L717,379.4L718,379.4L718,388.7L719,388.7L719,384.6L720,384.6L720,387.8L721,387.8L721,383.8L722,383.8L722,383.0L723,383.0L723,384.7L724,384.7L724,382.9L725,382.9L725,384.4L726,384.4L726,383.5L727,383.5L727,384.9L728,384.9L728,381.7L729,381.7L729,382.1L730,382.1L730,384.6L731,384.6L731,381.4L732,381.4L732,378.7L733,378.7L733,380.1L734,380.1L734,382.1L735,382.1L735,378.1L736,378.1L736,382.4L737,382.4L737,376.4L738,376.4L738,380.7L739,380.7L739,387.7L740,387.7L740,387.1L741,387.1L741,375.5L742,375.5L742,382.5L743,382.5L743,386.0L744,386.0L744,378.3L745,378.3L745,389.4L746,389.4L746,377.3L747,377.3L747,388.9L748,388.9L748,385.3L749,385.3L749,385.3L750,385.3L750,387.7L751,387.7L751,388.3L752,388.3L752,389.0L753,389.0L753,386.9L754,386.9L754,379.2L755,379.2L755,378.8L756,378.8L756,380.8L757,380.8L757,380.2L758,380.2L758,372.8L759,372.8L759,380.2L760,380.2L760,383.8L761,383.8L761,381.8L762,381.8L762,383.2L763,383.2L763,389.3L764,389.3L764,379.4L765,379.4L765,383.1L766,383.1L766,384.7L767,384.7L767,379.3L768,379.3L768,383.1L769,383.1L769,380.9L770,380.9L770,381.6L771,381.6L771,386.4L772,386.4L772,388.4L773,388.4L773,382.8L774,382.8L774,377.5L775,377.5L775,385.1L776,385.1L776,389.3L777,389.3L777,379.3L778,379.3L778,379.7L779,379.7L779,386.8L780,386.8L780,387.1L781,387.1L781,380.9L782,380.9L782,388.5L783,388.5L783,383.2L784,383.2L784,382.9L785,382.9L785,387.1L786,387.1L786,380.9L787,380.9L787,377.2L788,377.2L788,377.5L789,377.5L789,380.0L790,380.0L790,388.1L791,388.1L791,377.5L792,377.5L792,381.9L793,381.9L793,386.2L794,386.2L794,377.7L795,377.7L795,388.5L796,388.5L796,379.0L797,379.0L797,386.3L798,386.3L798,377.8L799,377.8L799,390.6L800,390.6L800,386.6L801,386.6L801,377.4L802,377.4L802,390.0L803,390.0L803,387.9L804,387.9L804,378.3L805,378.3L805,378.9L806,378.9L806,387.4L807,387.4L807,384.1L808,384.1L808,386.2L809,386.2L809,387.7L810,387.7L810,378.9L811,378.9L811,380.6L812,380.6L812,388.7L813,388.7L813,390.1L814,390.1L814,379.7L815,379.7L815,384.7L816,384.7L816,379.1L817,379.1L817,389.0L818,389.0L818,379.6L819,379.6L819,380.0L820,380.0L820,383.7L821,383.7L821,380.5L822,380.5L822,388.4L823,388.4L823,385.0L824,385.0L824,391.7L825,391.7L825,393.2L826,393.2L826,388.8L827,388.8L827,389.1L828,389.1L828,389.4L829,389.4L829,388.2L830,388.2L830,389.9L831,389.9L831,383.2L832,383.2L832,383.4L833,383.4L833,392.6L834,392.6L834,382.5L835,382.5L835,389.1L836,389.1L836,382.8L837,382.8L837,389.6L838,389.6L838,394.6L839,394.6L839,388.2L840,388.2L840,388.7L841,388.7L841,385.1L842,385.1L842,381.5L843,381.5L843,383.2L844,383.2L844,384.3L845,384.3L845,394.4L846,394.4L846,383.9L847,383.9L847,383.4L848,383.4L848,395.1L849,395.1L849,394.4L850,394.4L850,389.7L851,389.7L851,385.0L852,385.0L852,386.7L853,386.7L853,388.6L854,388.6L854,383.9L855,383.9L855,395.3L856,395.3L856,392.7L857,392.7L857,396.3L858,396.3L858,381.2L859,381.2L859,383.8L860,383.8L860,387.1L861,387.1L861,388.4L862,388.4L862,383.5L863,383.5L863,389.8L864,389.8L864,394.4L865,394.4L865,395.7L866,395.7L866,391.4L867,391.4L867,388.3L868,388.3L868,387.6L869,387.6L869,385.9L870,385.9L870,394.7L871,394.7L871,385.5L872,385.5L872,392.8L873,392.8L873,388.6L874,388.6L874,393.8L875,393.8L875,387.8L876,387.8L876,397.7L877,397.7L877,388.7L878,388.7L878,393.3L879,393.3L879,393.1L880,393.1L880,397.8L881,397.8L881,391.0L882,391.0L882,386.2L883,386.2L883,393.2L884,393.2L884,391.3L885,391.3L885,392.9L886,392.9L886,393.1L887,393.1L887,397.4L888,397.4L888,396.1L889,396.1L889,399.4L890,399.4L890,394.3L891,394.3L891,397.8L892,397.8L892,398.9L893,398.9L893,388.9L894,388.9L894,398.2L895,398.2L895,394.8L896,394.8L896,397.2L897,397.2L897,390.0L898,390.0L898,401.5L899,401.5L899,387.8L900,387.8L900,397.3L901,397.3L901,393.1L902,393.1L902,395.0L903,395.0L903,394.9L904,394.9L904,401.3L905,401.3L905,397.3L906,397.3L906,394.4L907,394.4L907,400.4L908,400.4L908,390.8L909,390.8L909,399.5L910,399.5L910,387.4L911,387.4L911,399.9L912,399.9L912,401.2L913,401.2L913,399.8L914,399.8L914,391.9L915,391.9L915,401.4L916,401.4L916,386.1L917,386.1L917,391.9L918,391.9L918,393.9L919,393.9L919,390.2L920,390.2L920,399.6L921,399.6L921,401.5L922,401.5L922,402.8L923,402.8L923,398.6L924,398.6L924,393.6L925,393.6L925,388.2L926,388.2L926,399.3L927,399.3L927,395.2L928,395.2L928,394.3L929,394.3L929,395.0L930,395.0L930,397.7L931,397.7L931,393.5L932,393.5L932,400.0L933,400.0L933,401.9L934,401.9L934,405.2L935,405.2L935,398.5L936,398.5L936,397.4L937,397.4L937,392.0L938,392.0L938,397.3L939,397.3L939,393.3L940,393.3L940,394.1L941,394.1L941,391.9L942,391.9L942,400.4L943,400.4L943,396.9L944,396.9L944,395.5L945,395.5L945,394.6L946,394.6L946,402.0L947,402.0L947,397.1L948,397.1L948,398.6L949,398.6L949,397.5L950,397.5L950,402.6L951,402.6L951,394.3L952,394.3L952,402.9L953,402.9L953,396.7L954,396.7" fill="none" stroke="#f2a8a8" stroke-width="1.6" opacity="0.45"/>
<path d="M35,387.9L35,387.9L36,387.9L36,386.2L37,386.2L37,379.8L38,379.8L38,380.1L39,380.1L39,388.0L40,388.0L40,384.9L41,384.9L41,384.8L42,384.8L42,389.0L43,389.0L43,379.7L44,379.7L44,381.4L45,381.4L45,390.2L46,390.2L46,383.3L47,383.3L47,390.6L48,390.6L48,384.9L49,384.9L49,379.6L50,379.6L50,379.0L51,379.0L51,370.0L52,370.0L52,380.6L53,380.6L53,378.8L54,378.8L54,389.7L55,389.7L55,388.2L56,388.2L56,385.3L57,385.3L57,387.1L58,387.1L58,386.0L59,386.0L59,383.4L60,383.4L60,379.2L61,379.2L61,378.9L62,378.9L62,378.1L63,378.1L63,388.9L64,388.9L64,378.5L65,378.5L65,383.6L66,383.6L66,388.3L67,388.3L67,383.5L68,383.5L68,390.2L69,390.2L69,378.1L70,378.1L70,380.6L71,380.6L71,389.0L72,389.0L72,381.0L73,381.0L73,390.4L74,390.4L74,390.4L75,390.4L75,386.7L76,386.7L76,378.3L77,378.3L77,378.0L78,378.0L78,390.0L79,390.0L79,390.6L80,390.6L80,385.7L81,385.7L81,381.6L82,381.6L82,386.9L83,386.9L83,379.3L84,379.3L84,385.0L85,385.0L85,382.6L86,382.6L86,383.7L87,383.7L87,378.8L88,378.8L88,385.4L89,385.4L89,387.9L90,387.9L90,378.3L91,378.3L91,378.8L92,378.8L92,377.4L93,377.4L93,376.6L94,376.6L94,384.9L95,384.9L95,386.4L96,386.4L96,378.1L97,378.1L97,382.2L98,382.2L98,387.7L99,387.7L99,383.3L100,383.3L100,386.3L101,386.3L101,386.2L102,386.2L102,387.1L103,387.1L103,375.1L104,375.1L104,381.4L105,381.4L105,388.1L106,388.1L106,387.9L107,387.9L107,385.3L108,385.3L108,389.7L109,389.7L109,386.7L110,386.7L110,385.3L111,385.3L111,388.8L112,388.8L112,382.5L113,382.5L113,385.1L114,385.1L114,389.4L115,389.4L115,388.5L116,388.5L116,380.1L117,380.1L117,387.4L118,387.4L118,382.7L119,382.7L119,386.5L120,386.5L120,387.2L121,387.2L121,387.5L122,387.5L122,385.6L123,385.6L123,385.7L124,385.7L124,381.3L125,381.3L125,379.6L126,379.6L126,385.4L127,385.4L127,378.9L128,378.9L128,381.3L129,381.3L129,382.4L130,382.4L130,387.2L131,387.2L131,382.1L132,382.1L132,387.3L133,387.3L133,390.4L134,390.4L134,382.0L135,382.0L135,379.3L136,379.3L136,376.8L137,376.8L137,388.8L138,388.8L138,382.4L139,382.4L139,385.6L140,385.6L140,383.0L141,383.0L141,387.7L142,387.7L142,384.8L143,384.8L143,386.4L144,386.4L144,384.0L145,384.0L145,388.8L146,388.8L146,379.0L147,379.0L147,374.2L148,374.2L148,375.4L149,375.4L149,386.0L150,386.0L150,317.0L151,317.0L151,386.0L152,386.0L152,387.5L153,387.5L153,385.5L154,385.5L154,377.6L155,377.6L155,389.4L156,389.4L156,390.1L157,390.1L157,379.9L158,379.9L158,384.5L159,384.5L159,386.9L160,386.9L160,382.6L161,382.6L161,386.3L162,386.3L162,386.7L163,386.7L163,372.0L164,372.0L164,383.8L165,383.8L165,386.1L166,386.1L166,388.7L167,388.7L167,383.1L168,383.1L168,386.1L169,386.1L169,382.9L170,382.9L170,386.2L171,386.2L171,381.9L172,381.9L172,382.0L173,382.0L173,387.8L174,387.8L174,382.0L175,382.0L175,385.5L176,385.5L176,379.6L177,379.6L177,386.1L178,386.1L178,380.7L179,380.7L179,385.0L180,385.0L180,380.4L181,380.4L181,379.5L182,379.5L182,382.3L183,382.3L183,383.7L184,383.7L184,379.6L185,379.6L185,377.5L186,377.5L186,389.7L187,389.7L187,381.5L188,381.5L188,389.4L189,389.4L189,382.2L190,382.2L190,378.6L191,378.6L191,373.8L192,373.8L192,384.4L193,384.4L193,389.6L194,389.6L194,374.2L195,374.2L195,383.7L196,383.7L196,387.9L197,387.9L197,387.8L198,387.8L198,381.2L199,381.2L199,386.2L200,386.2L200,386.4L201,386.4L201,389.9L202,389.9L202,378.4L203,378.4L203,381.3L204,381.3L204,382.0L205,382.0L205,382.2L206,382.2L206,384.7L207,384.7L207,379.3L208,379.3L208,389.8L209,389.8L209,379.1L210,379.1L210,385.2L211,385.2L211,388.6L212,388.6L212,388.4L213,388.4L213,386.9L214,386.9L214,382.0L215,382.0L215,387.2L216,387.2L216,385.6L217,385.6L217,383.4L218,383.4L218,382.8L219,382.8L219,386.0L220,386.0L220,386.3L221,386.3L221,380.9L222,380.9L222,378.1L223,378.1L223,383.2L224,383.2L224,380.2L225,380.2L225,383.8L226,383.8L226,381.6L227,381.6L227,385.8L228,385.8L228,378.5L229,378.5L229,388.0L230,388.0L230,381.7L231,381.7L231,378.5L232,378.5L232,357.0L233,357.0L233,387.9L234,387.9L234,387.6L235,387.6L235,381.8L236,381.8L236,379.3L237,379.3L237,379.8L238,379.8L238,385.5L239,385.5L239,389.9L240,389.9L240,380.2L241,380.2L241,386.4L242,386.4L242,377.5L243,377.5L243,385.3L244,385.3L244,388.3L245,388.3L245,378.6L246,378.6L246,383.9L247,383.9L247,387.4L248,387.4L248,389.5L249,389.5L249,379.2L250,379.2L250,378.8L251,378.8L251,381.0L252,381.0L252,387.2L253,387.2L253,382.5L254,382.5L254,387.5L255,387.5L255,378.5L256,378.5L256,384.0L257,384.0L257,384.6L258,384.6L258,381.7L259,381.7L259,383.6L260,383.6L260,382.6L261,382.6L261,388.7L262,388.7L262,382.5L263,382.5L263,378.9L264,378.9L264,386.7L265,386.7L265,383.2L266,383.2L266,382.6L267,382.6L267,386.9L268,386.9L268,390.1L269,390.1L269,381.2L270,381.2L270,381.4L271,381.4L271,387.5L272,387.5L272,374.1L273,374.1L273,387.8L274,387.8L274,386.4L275,386.4L275,385.8L276,385.8L276,381.0L277,381.0L277,380.0L278,380.0L278,387.5L279,387.5L279,389.5L280,389.5L280,381.5L281,381.5L281,388.5L282,388.5L282,381.3L283,381.3L283,381.3L284,381.3L284,389.1L285,389.1L285,388.5L286,388.5L286,383.6L287,383.6L287,387.7L288,387.7L288,390.6L289,390.6L289,379.4L290,379.4L290,386.0L291,386.0L291,383.4L292,383.4L292,378.3L293,378.3L293,387.1L294,387.1L294,384.7L295,384.7L295,374.7L296,374.7L296,382.4L297,382.4L297,384.2L298,384.2L298,388.5L299,388.5L299,390.5L300,390.5L300,382.6L301,382.6L301,383.6L302,383.6L302,379.4L303,379.4L303,380.7L304,380.7L304,390.3L305,390.3L305,388.0L306,388.0L306,384.0L307,384.0L307,386.8L308,386.8L308,382.0L309,382.0L309,379.8L310,379.8L310,378.9L311,378.9L311,381.4L312,381.4L312,380.5L313,380.5L313,379.8L314,379.8L314,381.2L315,381.2L315,386.2L316,386.2L316,388.4L317,388.4L317,384.5L318,384.5L318,384.0L319,384.0L319,382.6L320,382.6L320,385.0L321,385.0L321,385.8L322,385.8L322,379.3L323,379.3L323,386.2L324,386.2L324,384.1L325,384.1L325,384.0L326,384.0L326,380.8L327,380.8L327,385.0L328,385.0L328,388.3L329,388.3L329,385.8L330,385.8L330,390.6L331,390.6L331,388.8L332,388.8L332,385.0L333,385.0L333,385.7L334,385.7L334,390.3L335,390.3L335,378.0L336,378.0L336,388.2L337,388.2L337,384.8L338,384.8L338,382.9L339,382.9L339,382.8L340,382.8L340,387.4L341,387.4L341,384.9L342,384.9L342,387.1L343,387.1L343,387.5L344,387.5L344,382.8L345,382.8L345,389.8L346,389.8L346,378.4L347,378.4L347,387.5L348,387.5L348,385.5L349,385.5L349,382.5L350,382.5L350,388.4L351,388.4L351,384.8L352,384.8L352,379.1L353,379.1L353,390.6L354,390.6L354,383.1L355,383.1L355,389.9L356,389.9L356,380.0L357,380.0L357,385.9L358,385.9L358,382.2L359,382.2L359,388.7L360,388.7L360,381.5L361,381.5L361,383.8L362,383.8L362,386.3L363,386.3L363,388.0L364,388.0L364,384.8L365,384.8L365,388.8L366,388.8L366,383.1L367,383.1L367,386.0L368,386.0L368,389.0L369,389.0L369,390.7L370,390.7L370,381.1L371,381.1L371,67.0L372,67.0L372,178.0L373,178.0L373,192.0L374,192.0L374,194.0L375,194.0L375,190.0L376,190.0L376,166.0L377,166.0L377,170.0L378,170.0L378,188.0L379,188.0L379,176.0L380,176.0L380,164.0L381,164.0L381,200.0L382,200.0L382,218.0L383,218.0L383,216.0L384,216.0L384,206.0L385,206.0L385,196.0L386,196.0L386,239.0L387,239.0L387,234.1L388,234.1L388,236.1L389,236.1L389,236.0L390,236.0L390,251.2L391,251.2L391,246.9L392,246.9L392,257.2L393,257.2L393,258.7L394,258.7L394,254.0L395,254.0L395,268.1L396,268.1L396,253.0L397,253.0L397,271.3L398,271.3L398,263.9L399,263.9L399,275.6L400,275.6L400,267.7L401,267.7L401,264.0L402,264.0L402,285.0L403,285.0L403,273.0L404,273.0L404,272.3L405,272.3L405,283.6L406,283.6L406,281.9L407,281.9L407,283.6L408,283.6L408,277.0L409,277.0L409,300.1L410,300.1L410,303.3L411,303.3L411,296.6L412,296.6L412,304.9L413,304.9L413,308.1L414,308.1L414,308.0L415,308.0L415,303.5L416,303.5L416,302.2L417,302.2L417,312.6L418,312.6L418,300.0L419,300.0L419,314.8L420,314.8L420,305.4L421,305.4L421,307.4L422,307.4L422,317.4L423,317.4L423,313.0L424,313.0L424,326.0L425,326.0L425,304.0L426,304.0L426,335.9L427,335.9L427,320.0L428,320.0L428,324.9L429,324.9L429,338.6L430,338.6L430,318.1L431,318.1L431,336.5L432,336.5L432,342.8L433,342.8L433,323.9L434,323.9L434,327.0L435,327.0L435,336.3L436,336.3L436,339.8L437,339.8L437,324.0L438,324.0L438,330.5L439,330.5L439,332.0L440,332.0L440,338.8L441,338.8L441,333.7L442,333.7L442,353.7L443,353.7L443,357.1L444,357.1L444,346.1L445,346.1L445,352.6L446,352.6L446,362.7L447,362.7L447,359.7L448,359.7L448,359.2L449,359.2L449,349.9L450,349.9L450,365.7L451,365.7L451,360.4L452,360.4L452,366.6L453,366.6L453,355.0L454,355.0L454,348.4L455,348.4L455,364.9L456,364.9L456,367.0L457,367.0L457,363.4L458,363.4L458,367.9L459,367.9L459,370.2L460,370.2L460,357.9L461,357.9L461,371.5L462,371.5L462,358.0L463,358.0L463,368.5L464,368.5L464,371.6L465,371.6L465,365.2L466,365.2L466,361.7L467,361.7L467,358.9L468,358.9L468,380.3L469,380.3L469,371.5L470,371.5L470,381.3L471,381.3L471,380.1L472,380.1L472,378.3L473,378.3L473,383.5L474,383.5L474,376.5L475,376.5L475,372.6L476,372.6L476,383.0L477,383.0L477,375.9L478,375.9L478,380.0L479,380.0L479,379.7L480,379.7L480,377.6L481,377.6L481,374.5L482,374.5L482,380.3L483,380.3L483,374.5L484,374.5L484,379.0L485,379.0L485,380.3L486,380.3L486,384.8L487,384.8L487,374.5L488,374.5L488,382.3L489,382.3L489,381.9L490,381.9L490,382.1L491,382.1L491,386.0L492,386.0L492,381.2L493,381.2L493,377.0L494,377.0L494,376.0L495,376.0L495,387.6L496,387.6L496,381.0L497,381.0L497,384.4L498,384.4L498,376.4L499,376.4L499,379.5L500,379.5L500,381.5L501,381.5L501,375.9L502,375.9L502,385.5L503,385.5L503,385.7L504,385.7L504,377.6L505,377.6L505,384.6L506,384.6L506,376.2L507,376.2L507,383.1L508,383.1L508,386.4L509,386.4L509,375.9L510,375.9L510,385.2L511,385.2L511,387.0L512,387.0L512,378.9L513,378.9L513,380.3L514,380.3L514,387.9L515,387.9L515,372.0L516,372.0L516,382.1L517,382.1L517,377.2L518,377.2L518,376.4L519,376.4L519,377.1L520,377.1L520,376.1L521,376.1L521,380.2L522,380.2L522,387.4L523,387.4L523,385.9L524,385.9L524,378.1L525,378.1L525,387.4L526,387.4L526,381.6L527,381.6L527,386.7L528,386.7L528,376.1L529,376.1L529,386.5L530,386.5L530,386.5L531,386.5L531,377.0L532,377.0L532,385.7L533,385.7L533,376.0L534,376.0L534,385.1L535,385.1L535,376.5L536,376.5L536,379.5L537,379.5L537,387.8L538,387.8L538,379.0L539,379.0L539,381.2L540,381.2L540,381.5L541,381.5L541,381.6L542,381.6L542,385.7L543,385.7L543,376.7L544,376.7L544,385.9L545,385.9L545,377.8L546,377.8L546,384.9L547,384.9L547,387.5L548,387.5L548,383.1L549,383.1L549,379.4L550,379.4L550,378.4L551,378.4L551,379.7L552,379.7L552,378.7L553,378.7L553,381.5L554,381.5L554,386.4L555,386.4L555,384.2L556,384.2L556,383.6L557,383.6L557,383.8L558,383.8L558,376.0L559,376.0L559,377.5L560,377.5L560,384.7L561,384.7L561,384.9L562,384.9L562,382.0L563,382.0L563,384.0L564,384.0L564,384.7L565,384.7L565,382.6L566,382.6L566,381.6L567,381.6L567,375.9L568,375.9L568,382.7L569,382.7L569,387.4L570,387.4L570,377.6L571,377.6L571,387.5L572,387.5L572,383.5L573,383.5L573,383.7L574,383.7L574,381.4L575,381.4L575,382.9L576,382.9L576,379.3L577,379.3L577,384.5L578,384.5L578,383.3L579,383.3L579,380.1L580,380.1L580,380.9L581,380.9L581,385.6L582,385.6L582,380.5L583,380.5L583,387.3L584,387.3L584,379.1L585,379.1L585,376.6L586,376.6L586,379.0L587,379.0L587,377.7L588,377.7L588,382.7L589,382.7L589,386.8L590,386.8L590,383.6L591,383.6L591,377.0L592,377.0L592,386.0L593,386.0L593,380.7L594,380.7L594,388.1L595,388.1L595,388.3L596,388.3L596,386.1L597,386.1L597,383.4L598,383.4L598,382.9L599,382.9L599,379.9L600,379.9L600,387.2L601,387.2L601,379.5L602,379.5L602,382.8L603,382.8L603,372.6L604,372.6L604,382.3L605,382.3L605,376.9L606,376.9L606,384.2L607,384.2L607,380.9L608,380.9L608,385.9L609,385.9L609,387.3L610,387.3L610,388.2L611,388.2L611,381.7L612,381.7L612,387.4L613,387.4L613,382.4L614,382.4L614,381.5L615,381.5L615,375.7L616,375.7L616,381.6L617,381.6L617,384.6L618,384.6L618,386.8L619,386.8L619,380.4L620,380.4L620,378.5L621,378.5L621,377.3L622,377.3L622,380.7L623,380.7L623,384.5L624,384.5L624,377.1L625,377.1L625,377.8L626,377.8L626,387.0L627,387.0L627,383.4L628,383.4L628,380.6L629,380.6L629,383.5L630,383.5L630,372.6L631,372.6L631,383.5L632,383.5L632,385.3L633,385.3L633,379.4L634,379.4L634,387.2L635,387.2L635,382.8L636,382.8L636,385.4L637,385.4L637,385.8L638,385.8L638,380.5L639,380.5L639,378.7L640,378.7L640,381.5L641,381.5L641,380.3L642,380.3L642,387.9L643,387.9L643,377.2L644,377.2L644,380.9L645,380.9L645,376.7L646,376.7L646,385.7L647,385.7L647,375.5L648,375.5L648,375.3L649,375.3L649,386.3L650,386.3L650,384.2L651,384.2L651,380.9L652,380.9L652,381.6L653,381.6L653,382.3L654,382.3L654,377.1L655,377.1L655,382.1L656,382.1L656,377.6L657,377.6L657,387.5L658,387.5L658,381.3L659,381.3L659,376.7L660,376.7L660,381.4L661,381.4L661,377.4L662,377.4L662,378.4L663,378.4L663,378.8L664,378.8L664,382.3L665,382.3L665,385.4L666,385.4L666,381.1L667,381.1L667,387.3L668,387.3L668,384.5L669,384.5L669,386.5L670,386.5L670,386.2L671,386.2L671,381.0L672,381.0L672,388.1L673,388.1L673,386.1L674,386.1L674,386.6L675,386.6L675,381.5L676,381.5L676,376.9L677,376.9L677,379.0L678,379.0L678,384.6L679,384.6L679,387.3L680,387.3L680,382.3L681,382.3L681,385.3L682,385.3L682,386.3L683,386.3L683,381.9L684,381.9L684,385.8L685,385.8L685,378.0L686,378.0L686,376.4L687,376.4L687,379.2L688,379.2L688,385.8L689,385.8L689,375.4L690,375.4L690,378.4L691,378.4L691,379.7L692,379.7L692,381.9L693,381.9L693,376.8L694,376.8L694,381.9L695,381.9L695,383.0L696,383.0L696,385.4L697,385.4L697,380.8L698,380.8L698,388.3L699,388.3L699,380.0L700,380.0L700,378.4L701,378.4L701,375.7L702,375.7L702,378.8L703,378.8L703,388.4L704,388.4L704,378.6L705,378.6L705,386.2L706,386.2L706,375.3L707,375.3L707,382.3L708,382.3L708,387.0L709,387.0L709,379.7L710,379.7L710,386.9L711,386.9L711,380.4L712,380.4L712,383.8L713,383.8L713,378.2L714,378.2L714,382.8L715,382.8L715,380.6L716,380.6L716,375.0L717,375.0L717,379.4L718,379.4L718,388.7L719,388.7L719,384.6L720,384.6L720,387.8L721,387.8L721,383.8L722,383.8L722,383.0L723,383.0L723,384.7L724,384.7L724,382.9L725,382.9L725,384.4L726,384.4L726,383.5L727,383.5L727,384.9L728,384.9L728,381.7L729,381.7L729,382.1L730,382.1L730,384.6L731,384.6L731,381.4L732,381.4L732,378.7L733,378.7L733,380.1L734,380.1L734,382.1L735,382.1L735,378.1L736,378.1L736,382.4L737,382.4L737,376.4L738,376.4L738,380.7L739,380.7L739,387.7L740,387.7L740,387.1L741,387.1L741,375.5L742,375.5L742,382.5L743,382.5L743,386.0L744,386.0L744,378.3L745,378.3L745,389.4L746,389.4L746,377.3L747,377.3L747,388.9L748,388.9L748,385.3L749,385.3L749,385.3L750,385.3L750,387.7L751,387.7L751,388.3L752,388.3L752,389.0L753,389.0L753,386.9L754,386.9L754,379.2L755,379.2L755,378.8L756,378.8L756,380.8L757,380.8L757,380.2L758,380.2L758,372.8L759,372.8L759,380.2L760,380.2L760,383.8L761,383.8L761,381.8L762,381.8L762,383.2L763,383.2L763,389.3L764,389.3L764,379.4L765,379.4L765,383.1L766,383.1L766,384.7L767,384.7L767,379.3L768,379.3L768,383.1L769,383.1L769,380.9L770,380.9L770,381.6L771,381.6L771,386.4L772,386.4L772,388.4L773,388.4L773,382.8L774,382.8L774,377.5L775,377.5L775,385.1L776,385.1L776,389.3L777,389.3L777,379.3L778,379.3L778,379.7L779,379.7L779,386.8L780,386.8L780,387.1L781,387.1L781,380.9L782,380.9L782,388.5L783,388.5L783,383.2L784,383.2L784,382.9L785,382.9L785,387.1L786,387.1L786,380.9L787,380.9L787,377.2L788,377.2L788,377.5L789,377.5L789,380.0L790,380.0L790,388.1L791,388.1L791,377.5L792,377.5L792,381.9L793,381.9L793,386.2L794,386.2L794,377.7L795,377.7L795,388.5L796,388.5L796,379.0L797,379.0L797,386.3L798,386.3L798,377.8L799,377.8L799,390.6L800,390.6L800,386.6L801,386.6L801,377.4L802,377.4L802,390.0L803,390.0L803,387.9L804,387.9L804,378.3L805,378.3L805,378.9L806,378.9L806,387.4L807,387.4L807,384.1L808,384.1L808,386.2L809,386.2L809,387.7L810,387.7L810,378.9L811,378.9L811,380.6L812,380.6L812,388.7L813,388.7L813,390.1L814,390.1L814,379.7L815,379.7L815,384.7L816,384.7L816,379.1L817,379.1L817,389.0L818,389.0L818,379.6L819,379.6L819,380.0L820,380.0L820,383.7L821,383.7L821,380.5L822,380.5L822,388.4L823,388.4L823,385.0L824,385.0L824,391.7L825,391.7L825,393.2L826,393.2L826,388.8L827,388.8L827,389.1L828,389.1L828,389.4L829,389.4L829,388.2L830,388.2L830,389.9L831,389.9L831,383.2L832,383.2L832,383.4L833,383.4L833,392.6L834,392.6L834,382.5L835,382.5L835,389.1L836,389.1L836,382.8L837,382.8L837,389.6L838,389.6L838,394.6L839,394.6L839,388.2L840,388.2L840,388.7L841,388.7L841,385.1L842,385.1L842,381.5L843,381.5L843,383.2L844,383.2L844,384.3L845,384.3L845,394.4L846,394.4L846,383.9L847,383.9L847,383.4L848,383.4L848,395.1L849,395.1L849,394.4L850,394.4L850,389.7L851,389.7L851,385.0L852,385.0L852,386.7L853,386.7L853,388.6L854,388.6L854,383.9L855,383.9L855,395.3L856,395.3L856,392.7L857,392.7L857,396.3L858,396.3L858,381.2L859,381.2L859,383.8L860,383.8L860,387.1L861,387.1L861,388.4L862,388.4L862,383.5L863,383.5L863,389.8L864,389.8L864,394.4L865,394.4L865,395.7L866,395.7L866,391.4L867,391.4L867,388.3L868,388.3L868,387.6L869,387.6L869,385.9L870,385.9L870,394.7L871,394.7L871,385.5L872,385.5L872,392.8L873,392.8L873,388.6L874,388.6L874,393.8L875,393.8L875,387.8L876,387.8L876,397.7L877,397.7L877,388.7L878,388.7L878,393.3L879,393.3L879,393.1L880,393.1L880,397.8L881,397.8L881,391.0L882,391.0L882,386.2L883,386.2L883,393.2L884,393.2L884,391.3L885,391.3L885,392.9L886,392.9L886,393.1L887,393.1L887,397.4L888,397.4L888,396.1L889,396.1L889,399.4L890,399.4L890,394.3L891,394.3L891,397.8L892,397.8L892,398.9L893,398.9L893,388.9L894,388.9L894,398.2L895,398.2L895,394.8L896,394.8L896,397.2L897,397.2L897,390.0L898,390.0L898,401.5L899,401.5L899,387.8L900,387.8L900,397.3L901,397.3L901,393.1L902,393.1L902,395.0L903,395.0L903,394.9L904,394.9L904,401.3L905,401.3L905,397.3L906,397.3L906,394.4L907,394.4L907,400.4L908,400.4L908,390.8L909,390.8L909,399.5L910,399.5L910,387.4L911,387.4L911,399.9L912,399.9L912,401.2L913,401.2L913,399.8L914,399.8L914,391.9L915,391.9L915,401.4L916,401.4L916,386.1L917,386.1L917,391.9L918,391.9L918,393.9L919,393.9L919,390.2L920,390.2L920,399.6L921,399.6L921,401.5L922,401.5L922,402.8L923,402.8L923,398.6L924,398.6L924,393.6L925,393.6L925,388.2L926,388.2L926,399.3L927,399.3L927,395.2L928,395.2L928,394.3L929,394.3L929,395.0L930,395.0L930,397.7L931,397.7L931,393.5L932,393.5L932,400.0L933,400.0L933,401.9L934,401.9L934,405.2L935,405.2L935,398.5L936,398.5L936,397.4L937,397.4L937,392.0L938,392.0L938,397.3L939,397.3L939,393.3L940,393.3L940,394.1L941,394.1L941,391.9L942,391.9L942,400.4L943,400.4L943,396.9L944,396.9L944,395.5L945,395.5L945,394.6L946,394.6L946,402.0L947,402.0L947,397.1L948,397.1L948,398.6L949,398.6L949,397.5L950,397.5L950,402.6L951,402.6L951,394.3L952,394.3L952,402.9L953,402.9L953,396.7L954,396.7" fill="none" stroke="#9a0808" stroke-width="0.7"/>
<line x1="402.5" x2="402.5" y1="361" y2="474" stroke="#d66a6a" stroke-width="1" opacity="0.6"/>
<line x1="420.5" x2="420.5" y1="412" y2="474" stroke="#d66a6a" stroke-width="1" opacity="0.6"/>
<line x1="439.5" x2="439.5" y1="435" y2="474" stroke="#d66a6a" stroke-width="1" opacity="0.6"/>
<line x1="371.5" x2="371.5" y1="67" y2="200" stroke="#8a1010" stroke-width="1.3"/>
<rect x="34" y="45" width="922" height="1.8" fill="#8e8e8e"/>
<rect x="33.8" y="45" width="1.5" height="430" fill="#8e8e8e"/>
<rect x="954" y="45" width="2" height="430" fill="#6a6a6a"/>
<rect x="35" y="473.6" width="919" height="1" fill="#8c0000"/>
</svg>
<div class="a" style="left:9px;top:-4.8px;font-size:7px;line-height:8px;color:#555">Remove All&nbsp;&nbsp;&nbsp;Info</div>
<div class="a" style="left:341px;top:-4.8px;font-size:7px;line-height:8px;color:#555;letter-spacing:0.8px">IR Windows&nbsp;&nbsp;&nbsp;SPL Meter&nbsp;&nbsp;&nbsp;Generator&nbsp;&nbsp;&nbsp;Scope&nbsp;&nbsp;&nbsp;EQ&nbsp;&nbsp;&nbsp;Overlays&nbsp;&nbsp;&nbsp;RTA&nbsp;&nbsp;&nbsp;EQ&nbsp;&nbsp;&nbsp;Room Sim</div>
<div class="a" style="left:922px;top:-4.2px;font-size:7px;line-height:8px;color:#333">Preferences</div>
<svg class="a" style="left:14px;top:10px" width="22" height="16" viewBox="14 10 22 16">
<defs><linearGradient id="cg" x1="0" y1="0" x2="1" y2="1"><stop offset="0" stop-color="#f8f8f8"/><stop offset="0.6" stop-color="#dedede"/><stop offset="1" stop-color="#b8b8b8"/></linearGradient>
<radialGradient id="lg"><stop offset="0" stop-color="#eee"/><stop offset="1" stop-color="#9a9a9a"/></radialGradient></defs>
<rect x="18.5" y="11.6" width="4" height="1.6" fill="#777"/>
<rect x="16.3" y="12.7" width="17.2" height="10.8" rx="1.6" fill="url(#cg)" stroke="#8e8e8e" stroke-width="0.9"/>
<path d="M16.8,22.9h16.2" stroke="#6e6e6e" stroke-width="0.8"/>
<circle cx="27.2" cy="18.2" r="4" fill="url(#lg)" stroke="#a8a8a8" stroke-width="0.6"/>
<ellipse cx="27.2" cy="18.2" rx="2.1" ry="1.6" fill="#2e2e2e"/>
</svg>
<div class="a t" style="left:12.5px;top:26px;">Capture</div>
<div class="a t" style="left:16px;top:37px;">dBFS</div>
<div class="tabs"><div class="tab" style="width:48px">SPL &amp; Phase</div><div class="tab" style="width:28.8px">All SPL</div><div class="tab" style="width:37.5px">Distortion</div><div class="tab" style="width:32.4px">Impulse</div><div class="tab sel" style="width:38px">Filtered IR</div><div class="tab" style="width:15.9px">GD</div><div class="tab" style="width:23.4px">RT60</div><div class="tab" style="width:44px">RT60 Decay</div><div class="tab" style="width:28.1px">Clarity</div><div class="tab" style="width:25.8px">Decay</div><div class="tab" style="width:33.2px">Waterfall</div><div class="tab" style="width:49.3px">Spectrogram</div><div class="tab" style="width:34.6px">Captured</div></div>
<svg class="a" style="left:834px;top:6px" width="125" height="22" viewBox="834 6 125 22">
<rect x="842.2" y="11" width="15.8" height="9.6" fill="#b8b8b8" stroke="#999" stroke-width="0.9"/>
<path d="M837.6,13h3.8l-1.9,-2.4z M837.6,18.6h3.8l-1.9,2.4z" fill="#1a1a1a"/><rect x="838.3" y="14.4" width="2.4" height="3" fill="#1a1a1a"/>
<path d="M844.2,21.4v3.4l-2.2,-1.7z M855.8,21.4v3.4l2.2,-1.7z" fill="#1a1a1a"/><rect x="846.6" y="22.2" width="6.6" height="2.2" fill="#1a1a1a"/>
<rect x="877" y="11" width="20.4" height="13.6" fill="#a8a8a8"/>
<rect x="893.2" y="11" width="0.8" height="13.6" fill="#b2b2b2"/><rect x="895.4" y="11" width="0.8" height="13.6" fill="#b2b2b2"/>
<rect x="910.3" y="11.7" width="19.2" height="12.4" fill="#fff" stroke="#d0d0d0" stroke-width="1"/>
<path d="M919.9,12.1l2.8,3.1h-1.8v1.5h-2v-1.5h-1.8z M919.9,23.9l2.8,-3.1h-1.8v-1.5h-2v1.5h-1.8z M910.5,18l3.1,-2.8v1.8h1.5v2h-1.5v1.8z M929.3,18l-3.1,-2.8v1.8h-1.5v2h1.5v1.8z" fill="#111"/>
<g transform="translate(950.6,18.1)">
<circle r="5.2" fill="#a0a0a0"/>
<rect x="-1.3" y="-6.5" width="2.6" height="2.4" fill="#a0a0a0" transform="rotate(0)"/><rect x="-1.3" y="-6.5" width="2.6" height="2.4" fill="#a0a0a0" transform="rotate(30)"/><rect x="-1.3" y="-6.5" width="2.6" height="2.4" fill="#a0a0a0" transform="rotate(60)"/><rect x="-1.3" y="-6.5" width="2.6" height="2.4" fill="#a0a0a0" transform="rotate(90)"/><rect x="-1.3" y="-6.5" width="2.6" height="2.4" fill="#a0a0a0" transform="rotate(120)"/><rect x="-1.3" y="-6.5" width="2.6" height="2.4" fill="#a0a0a0" transform="rotate(150)"/><rect x="-1.3" y="-6.5" width="2.6" height="2.4" fill="#a0a0a0" transform="rotate(180)"/><rect x="-1.3" y="-6.5" width="2.6" height="2.4" fill="#a0a0a0" transform="rotate(210)"/><rect x="-1.3" y="-6.5" width="2.6" height="2.4" fill="#a0a0a0" transform="rotate(240)"/><rect x="-1.3" y="-6.5" width="2.6" height="2.4" fill="#a0a0a0" transform="rotate(270)"/><rect x="-1.3" y="-6.5" width="2.6" height="2.4" fill="#a0a0a0" transform="rotate(300)"/><rect x="-1.3" y="-6.5" width="2.6" height="2.4" fill="#a0a0a0" transform="rotate(330)"/>
<circle r="3.6" fill="#bdbdbd"/><circle r="2.6" fill="none" stroke="#7e7e7e" stroke-width="1"/><circle r="1.7" fill="#f8f8f8"/>
</g>
</svg>
<div class="a t" style="left:832px;top:27.6px;color:#333">Scrollbars</div>
<div class="a t" style="left:872px;top:27.6px;color:#bbb">Freq. Axis</div>
<div class="a t" style="left:910.5px;top:27.6px;color:#333">Limits</div>
<div class="a t" style="left:937px;top:27.6px;color:#333">Controls</div>
<div class="a" style="left:0;top:46px;width:9px;height:428px;background:#fff;box-sizing:border-box;border-right:1px solid #b0b0b0;border-left:1px solid #c4c4c4"></div>
<div class="a" style="left:0;top:46px;width:9px;height:9px;box-sizing:border-box;background:linear-gradient(90deg,#e8e8e8,#d0d0d0);border:1px solid #a8a8a8;border-left:none"></div>
<svg class="a" style="left:2px;top:49px" width="5" height="3"><path d="M0,3H5L2.5,0z" fill="#222"/></svg>
<div class="a" style="left:0;top:103px;width:9px;height:154px;box-sizing:border-box;background:linear-gradient(90deg,#b8b8b8 0,#b8b8b8 1px,#f2f2f2 1px,#f2f2f2 2px,#dedede 3px,#d0d0d0 7px);border:1px solid #a8a8a8;border-left:none"></div>
<div class="a" style="left:0;top:464px;width:9px;height:10px;box-sizing:border-box;background:linear-gradient(90deg,#e8e8e8,#d0d0d0);border:1px solid #a8a8a8;border-left:none"></div>
<svg class="a" style="left:2px;top:468px" width="5" height="3"><path d="M0,0H5L2.5,3z" fill="#222"/></svg>

<div class="yl" style="top:63.7px">0</div>
<div class="yl" style="top:84.3px">-5</div>
<div class="yl" style="top:105.0px">-10</div>
<div class="yl" style="top:125.6px">-15</div>
<div class="yl" style="top:146.2px">-20</div>
<div class="yl" style="top:166.9px">-25</div>
<div class="yl" style="top:187.5px">-30</div>
<div class="yl" style="top:208.1px">-35</div>
<div class="yl" style="top:228.8px">-40</div>
<div class="yl" style="top:249.4px">-45</div>
<div class="yl" style="top:270.1px">-50</div>
<div class="yl" style="top:290.7px">-55</div>
<div class="yl" style="top:311.3px">-60</div>
<div class="yl" style="top:332.0px">-65</div>
<div class="yl" style="top:352.6px">-70</div>
<div class="yl" style="top:373.2px">-75</div>
<div class="yl" style="top:393.9px">-80</div>
<div class="yl" style="top:414.5px">-85</div>
<div class="yl" style="top:435.1px">-90</div>
<div class="yl" style="top:455.8px">-95</div>
<div class="xl" style="left:5.1px;width:60px;text-align:center">-1.00</div>
<div class="xl" style="left:38.8px;width:60px;text-align:center">-900m</div>
<div class="xl" style="left:72.5px;width:60px;text-align:center">-800m</div>
<div class="xl" style="left:106.2px;width:60px;text-align:center">-700m</div>
<div class="xl" style="left:139.8px;width:60px;text-align:center">-600m</div>
<div class="xl" style="left:173.5px;width:60px;text-align:center">-500m</div>
<div class="xl" style="left:207.2px;width:60px;text-align:center">-400m</div>
<div class="xl" style="left:240.9px;width:60px;text-align:center">-300m</div>
<div class="xl" style="left:274.5px;width:60px;text-align:center">-200m</div>
<div class="xl" style="left:308.2px;width:60px;text-align:center">-100m</div>
<div class="xl" style="left:341.9px;width:60px;text-align:center">0u</div>
<div class="xl" style="left:375.6px;width:60px;text-align:center">100m</div>
<div class="xl" style="left:409.3px;width:60px;text-align:center">200m</div>
<div class="xl" style="left:442.9px;width:60px;text-align:center">300m</div>
<div class="xl" style="left:476.6px;width:60px;text-align:center">400m</div>
<div class="xl" style="left:510.3px;width:60px;text-align:center">500m</div>
<div class="xl" style="left:544.0px;width:60px;text-align:center">600m</div>
<div class="xl" style="left:577.6px;width:60px;text-align:center">700m</div>
<div class="xl" style="left:611.3px;width:60px;text-align:center">800m</div>
<div class="xl" style="left:645.0px;width:60px;text-align:center">900m</div>
<div class="xl" style="left:678.7px;width:60px;text-align:center">1.0</div>
<div class="xl" style="left:712.3px;width:60px;text-align:center">1.1</div>
<div class="xl" style="left:746.0px;width:60px;text-align:center">1.2</div>
<div class="xl" style="left:779.7px;width:60px;text-align:center">1.3</div>
<div class="xl" style="left:813.4px;width:60px;text-align:center">1.4</div>
<div class="xl" style="left:847.0px;width:60px;text-align:center">1.5</div>
<div class="xl" style="left:880.7px;width:60px;text-align:center">1.6</div>
<div class="xl" style="left:914.4px;width:60px;text-align:center">1.7</div>
<div class="a" style="left:35px;top:487px;width:920px;height:9px;background:#fff;box-sizing:border-box;border-bottom:1px solid #a0a0a0;border-top:1px solid #c8c8c8"></div>
<div class="a" style="left:35px;top:487px;width:9px;height:9px;box-sizing:border-box;background:linear-gradient(#eaeaea,#d0d0d0);border:1px solid #a8a8a8"></div>
<svg class="a" style="left:38px;top:489px" width="3" height="5"><path d="M3,0V5L0,2.5z" fill="#222"/></svg>
<div class="a" style="left:114px;top:487px;width:22px;height:9px;box-sizing:border-box;background:linear-gradient(#e8e8e8,#cfcfcf);border:1px solid #a8a8a8"></div>
<div class="a" style="left:945px;top:487px;width:10px;height:9px;box-sizing:border-box;background:linear-gradient(#eaeaea,#d0d0d0);border:1px solid #a8a8a8"></div>
<svg class="a" style="left:949px;top:489px" width="3" height="5"><path d="M0,0V5L3,2.5z" fill="#222"/></svg>
<div class="a" style="left:190px;top:497px;width:608px;height:6px;background:#fff;box-sizing:border-box;border:1px solid #888;border-radius:2px"></div>

<div class="a" style="left:36.5px;top:86.5px;width:129.5px;height:143px;box-sizing:border-box;border:2px solid #8a8a8a;border-radius:9px;background:rgba(255,255,255,0.78)"></div>
<div class="a t" style="left:37px;width:128px;top:91.8px;text-align:center;color:#333">No Filter</div>
<div class="row g" style="top:102.3px"><span style="left:3px">Topt -13..-57 dB</span><span class="" style="left:58px">0,458 s.&nbsp;&nbsp;&nbsp;r = -0,995</span></div>
<div class="row" style="top:115.9px"><span style="left:3px">EDT&nbsp;&nbsp;0..-10 dB</span><span class="or" style="left:58px">0,015 s. r = -0,833</span></div>
<div class="row g" style="top:129.5px"><span style="left:3px">T20 -5..-25 dB</span><span class="" style="left:58px">0,236 s.&nbsp;&nbsp;&nbsp;r = -0,991</span></div>
<div class="row" style="top:143.1px"><span style="left:3px">T30 -5..-35 dB</span><span class="or" style="left:58px">0,329 s. r = -0,986</span></div>
<div class="row g" style="top:156.7px"><span style="left:3px">Curvature</span><span class="" style="left:58px">39,7 %</span></div>
<div class="row" style="top:170.3px"><span style="left:3px">Clarity C50</span><span class="" style="left:58px">22,59 dB</span></div>
<div class="row g" style="top:183.9px"><span style="left:3px">Clarity C80</span><span class="" style="left:58px">27,54 dB</span></div>
<div class="row" style="top:197.5px"><span style="left:3px">Definition D50</span><span class="" style="left:58px">99,5 %</span></div>
<div class="row g" style="top:211.1px"><span style="left:3px">Centre time TS</span><span class="" style="left:58px">0,002 s</span></div>
<div class="a" style="left:36px;top:460.5px;width:32px;height:11.6px;box-sizing:border-box;background:#f3cccc;border:1px solid #e0a8a8;border-radius:2px;font-size:7px;line-height:10.6px;text-align:center;color:#333">No Filter</div>
<svg class="a" style="left:0;top:0" width="959" height="500"><path d="M0,0.8H661V243.5H2" fill="none" stroke="#1a1a1a" stroke-width="1.3" stroke-dasharray="2.4 2.1"/><path d="M0.8,0.8V46" fill="none" stroke="#1a1a1a" stroke-width="1.3" stroke-dasharray="2.4 2.1"/><path d="M0,0.8H661V243.5H2" fill="none" stroke="#fbe8e8" stroke-width="1.3" stroke-dasharray="2.4 2.1" clip-path="url(#wf)"/></svg>
<div class="a" style="left:15px;top:244px;width:19.5px;height:8px;box-sizing:border-box;border:1px solid #5555bb;background:#fff;color:#3b3bb0;font-size:7px;line-height:6px;font-weight:bold;text-align:center">-43.8</div>
<div class="a" style="left:943px;top:476px;width:17px;height:8px;box-sizing:border-box;background:#7373cf;border-radius:2px;color:#fff;font-size:7px;line-height:8px;font-weight:bold;padding-left:1px">1.73</div>
</body></html>
